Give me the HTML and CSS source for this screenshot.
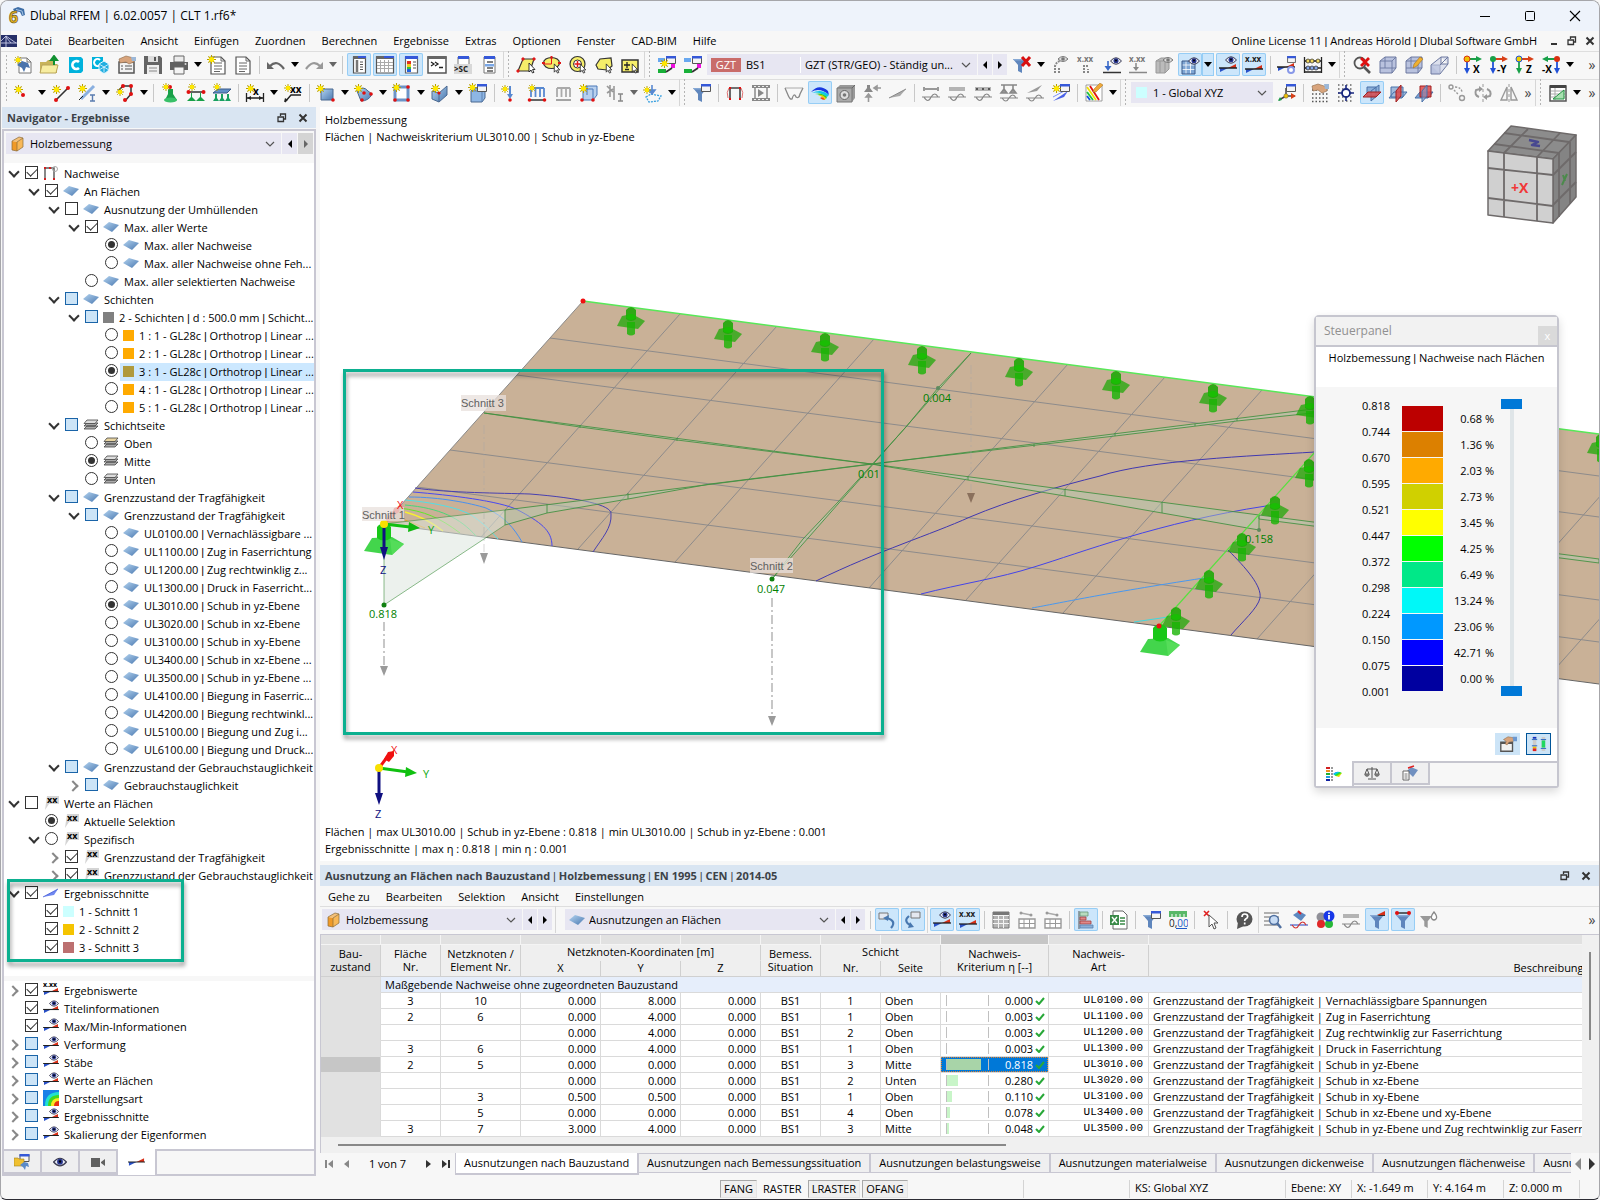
FILE: index.html
```html
<!DOCTYPE html>
<html lang="de">
<head>
<meta charset="utf-8">
<title>Dlubal RFEM | 6.02.0057 | CLT 1.rf6*</title>
<link rel="stylesheet" href="styles.css">
</head>
<body>
<svg class="sprite" aria-hidden="true">
<symbol id="star" viewBox="0 0 10 10"><path d="M5 0v10M0 5h10M1.5 1.5l7 7M8.500 1.500l-7 7" stroke="#b8a000" stroke-width="1.2"/><circle cx="5" cy="5" r="2.800" fill="#ffe800"/></symbol>
<symbol id="win" viewBox="0 0 10 8"><path d="M.5.5h9v7h-9z" fill="#f4f4f4" stroke="#555"/><path d="M0 0h10v2.500H0z" fill="#3558d8"/></symbol>
<symbol id="eye" viewBox="0 0 12 8"><path d="M.5 4Q6-2.500 11.500 4Q6 10.500.5 4z" fill="#e8ecf8" stroke="#3a3a50"/><circle cx="6" cy="3.800" r="2.500" fill="#26348c"/><circle cx="6" cy="3.600" r="1" fill="#000"/></symbol>
<symbol id="wedge" viewBox="0 0 18 8"><path d="M1 4h8L1 8z" fill="#2850c8"/><path d="M9 4l8-4v4z" fill="#d83018"/><path d="M0 4h18" stroke="#222" stroke-width="1.300"/></symbol>
<symbol id="cur" viewBox="0 0 8 12"><path d="M1 1v9l2-2 1.500 3 1.500-.7L4.500 7.500H7z" fill="#fff" stroke="#222" stroke-width=".9"/></symbol>
<symbol id="funnel" viewBox="0 0 14 16"><path d="M0 1h14L9 7v8l-4-2V7z" fill="#5f86bd"/><path d="M0 1h14l-1 1.500H1z" fill="#86a8d4"/></symbol>
<symbol id="funnelg" viewBox="0 0 14 16"><path d="M0 1h14L9 7v8l-4-2V7z" fill="#999"/></symbol>

<symbol id="i-logo" viewBox="0 0 18 18"><path d="M6 2l5-2 6 2 1 6-3 1-2-4-6-1z" fill="#3f6fa8"/><path d="M9 2.500l6 1.500 1 4" stroke="#a6c4e4" fill="none"/><text x="2" y="16" class="t16" fill="#f0b820" stroke="#6b5a20" stroke-width=".7">6</text></symbol>
<symbol id="i-flag" viewBox="0 0 16 12"><path d="M0 0h16v12H0z" fill="#262f68"/><path d="M0 8h16M5 1v11M5 1L0 6M5 1l10 7M5 2l5 6" stroke="#c8cce8" stroke-width=".9"/></symbol>
<symbol id="i-new" viewBox="0 0 20 20"><path d="M6 3h8l4 4v11H6z" fill="#fff" stroke="#777"/><path d="M14 3v4h4" fill="none" stroke="#777"/><path d="M4 10l5-4 6 2 2 5-4-1-2 5-2-4z" fill="#4a74ac"/><use href="#star" x="1" y="1" width="8" height="8"/></symbol>
<symbol id="i-open" viewBox="0 0 20 20"><path d="M1 7h6l2-2h6v4h3v9H1z" fill="#c8b45a"/><path d="M1 18l2-8h16l-2 8z" fill="#f7eda0" stroke="#b8a458"/><path d="M15 10V4M12 5l3-4 3 4z" stroke="#109030" stroke-width="2" fill="#109030"/></symbol>
<symbol id="i-cloud" viewBox="0 0 20 20"><path d="M4 2h12l2 2v12l-2 2H4z" fill="#00b2dc"/><path d="M14 7a4 4 0 1 0 0 6" fill="none" stroke="#fff" stroke-width="2.600"/></symbol>
<symbol id="i-cloud2" viewBox="0 0 20 20"><path d="M1 2h11v12H1z" fill="#00b2dc"/><path d="M9 5a3.500 3.500 0 1 0 0 5" fill="none" stroke="#fff" stroke-width="2"/><path d="M8 9l5-3 5 3v6l-5 4-5-4z" fill="#22aee0" stroke="#e8f8ff"/><path d="M8 9l5 3 5-3M13 12v7M8 15l5-3 5 3" stroke="#e8f8ff" fill="none" stroke-width=".8"/></symbol>
<symbol id="i-props" viewBox="0 0 20 20"><path d="M2 7h15v11H2z" fill="#f2f2f2" stroke="#555" stroke-width="1.500"/><path d="M4 11h2M8 11h7M4 14h2M8 14h7" stroke="#555"/><path d="M2 4l7-3 8 2v4l-5 2-3-2-6 1z" fill="#d8a47c" stroke="#8c6848" stroke-width=".6"/><path d="M14 2h5v4h-4z" fill="#9cb8d8"/></symbol>
<symbol id="i-opt" viewBox="0 0 20 20"><path d="M2 8h13v10H2z" fill="#f2f2f2" stroke="#555" stroke-width="1.500"/><path d="M2 8h13v2H2z" fill="#555"/><path d="M5 5l5-3 6 1v4l-5 1-2 3-2-1 1-3z" fill="#d8a47c" stroke="#8c6848" stroke-width=".6"/><path d="M15 2h5v5h-4z" fill="#6c98d0"/></symbol>
<symbol id="i-save" viewBox="0 0 20 20"><path d="M1 1h16l2 2v16H1z" fill="#646464"/><path d="M5 1h10v6H5z" fill="#ddd"/><path d="M11 2h2v4h-2z" fill="#555"/><path d="M4 10h12v9H4z" fill="#eee"/><path d="M6 13h8M6 16h8" stroke="#888"/></symbol>
<symbol id="i-print" viewBox="0 0 20 20"><path d="M5 1h10v6H5z" fill="#ececec" stroke="#666"/><path d="M1 7h18v8H1z" fill="#606060"/><path d="M5 12h10v7H5z" fill="#f4f4f4" stroke="#666"/><circle cx="16.500" cy="9" r="1" fill="#ddd"/></symbol>
<symbol id="i-doc" viewBox="0 0 20 20"><path d="M3 2h10l4 4v13H3z" fill="#fff" stroke="#555" stroke-width="1.200"/><path d="M13 2v4h4M6 8h8M6 11h8M6 14h8M6 16.500h6" fill="none" stroke="#666"/></symbol>
<symbol id="i-docnew" viewBox="0 0 20 20"><use href="#i-doc" width="20" height="20" x="1"/><use href="#star" x="0" y="0" width="9" height="9"/></symbol>
<symbol id="i-undo" viewBox="0 0 20 20"><path d="M4 11q7-7 14 3" fill="none" stroke="#666" stroke-width="2.200"/><path d="M1 7v7h7z" fill="#666"/></symbol>
<symbol id="i-redo" viewBox="0 0 20 20"><path d="M16 11q-7-7-14 3" fill="none" stroke="#999" stroke-width="2.200"/><path d="M19 7v7h-7z" fill="#999"/></symbol>
<symbol id="i-p1" viewBox="0 0 20 20"><path d="M4.500 2h12v16h-12z" fill="#fff" stroke="#555" stroke-width="1.200"/><path d="M4 1h13v3H4z" fill="#666"/><path d="M9 1h8v2H9z" fill="#3558d8"/><path d="M8 5v12" stroke="#777" stroke-width="2.500"/><path d="M11 7h3M11 9.500h3M11 12h3M11 14.500h3" stroke="#555"/></symbol>
<symbol id="i-p2" viewBox="0 0 20 20"><path d="M1.500 2h17v16h-17z" fill="#fff" stroke="#555" stroke-width="1.200"/><path d="M1 1h18v3H1z" fill="#666"/><path d="M9 1h10v2H9z" fill="#3558d8"/><path d="M2 7.500h16M2 10.500h16M2 13.500h16M5.500 5v13M9.500 5v13M13.500 5v13" stroke="#aaa"/></symbol>
<symbol id="i-p3" viewBox="0 0 20 20"><path d="M4.500 2h12v16h-12z" fill="#fff" stroke="#666" stroke-width="1.200"/><path d="M4 1h13v3H4z" fill="#3558d8"/><path d="M6 6h4v3H6z" fill="#e03020"/><path d="M6 9h4v3H6z" fill="#f0d020"/><path d="M6 12h4v2H6z" fill="#30c040"/><path d="M6 14h4v3H6z" fill="#2060e0"/><path d="M12 7h3M12 10h3M12 13h3" stroke="#555"/></symbol>
<symbol id="i-con" viewBox="0 0 20 20"><path d="M1 2h18v16H1z" fill="#fff" stroke="#555" stroke-width="1.500"/><path d="M.5 1h19v3H.5z" fill="#666"/><path d="M4 7l3 2-3 2M8 7l3 2-3 2M12 12.500h4" fill="none" stroke="#222" stroke-width="1.300"/></symbol>
<symbol id="i-sc" viewBox="0 0 20 20"><path d="M5 2h11v9H5z" fill="#fff" stroke="#777"/><path d="M5 1h11v3H5z" fill="#3558d8"/><path d="M1 9h18v10H1z" fill="#d8d8d8"/><text x="1" y="17" class="t8b" fill="#222">&gt;SC</text></symbol>
<symbol id="i-p4" viewBox="0 0 20 20"><path d="M5 2h11v16H5z" fill="#fff" stroke="#777"/><path d="M5 1h11v3H5z" fill="#3558d8"/><path d="M8 7h6M8 13h6M8 16h6" stroke="#555" stroke-width="1.300"/><path d="M6 9h9v2.500H6z" fill="#7aa8e8"/></symbol>
<symbol id="i-s1" viewBox="0 0 20 20"><path d="M7 4h11l-4 12H2z" fill="#f6ee6a" stroke="#333" stroke-width="1.200"/><path d="M6 3h2v2H6zM17 3h2v2h-2zM1 15h2v2H1z" fill="#e01818" stroke="#e01818"/><use href="#cur" x="12" y="7" width="8" height="12"/></symbol>
<symbol id="i-s2" viewBox="0 0 20 20"><ellipse cx="9.500" cy="8" rx="8" ry="5.500" fill="#f6ee6a" stroke="#333" stroke-width="1.200"/><path d="M9.500 2v7H1" stroke="#e01818" stroke-width="1" fill="none"/><path d="M8.500 1h2v3h-2zM0 7h3v2H0zM16 7h3v2h-3z" fill="#e01818"/><use href="#cur" x="11" y="8" width="8" height="11"/></symbol>
<symbol id="i-s3" viewBox="0 0 20 20"><circle cx="9.500" cy="9" r="7.500" fill="#f6ee6a" stroke="#333" stroke-width="1.200"/><circle cx="9.500" cy="9" r="4" fill="#fff" stroke="#333"/><path d="M9.500 6v6M6.500 9h6" stroke="#e01818" stroke-width="1.500"/><use href="#cur" x="11" y="8" width="8" height="11"/></symbol>
<symbol id="i-s4" viewBox="0 0 20 20"><path d="M2 10l4-6 11-1 1 8-5 4-9-1z" fill="#f6ee6a" stroke="#333" stroke-width="1.200"/><use href="#cur" x="11" y="8" width="8" height="11"/></symbol>
<symbol id="i-s5" viewBox="0 0 20 20"><path d="M2 5h16v12H2z" fill="#f6ee6a" stroke="#333" stroke-width="1.500"/><path d="M7 7v6M4 10h6M5 14.500h4" stroke="#222" stroke-width="1.300"/><use href="#cur" x="11" y="8" width="8" height="11"/></symbol>
<symbol id="i-f2" viewBox="0 0 20 20"><path d="M1 3h7v4H1z" fill="#68a8f0"/><use href="#win" x="9" y="1" width="10" height="8"/><path d="M14 9h4v4h-4z" fill="#f010e0"/><path d="M1 14h8v4H1z" fill="#18b038"/><path d="M9 17l6-4" stroke="#333" stroke-width="1.800"/></symbol>
<symbol id="i-f1" viewBox="0 0 20 20"><use href="#i-f2" width="20" height="20"/><use href="#star" x="3" y="4" width="9" height="9"/></symbol>
<symbol id="i-fx" viewBox="0 0 20 20"><use href="#funnel" x="1" y="3" width="14" height="16"/><path d="M10 2l8 9M18 2l-8 9" stroke="#d81010" stroke-width="3"/></symbol>
<symbol id="i-geye" viewBox="0 0 20 20"><path d="M5 18V11q2-5 6-5M9 18v-6" fill="none" stroke="#888" stroke-width="2" stroke-dasharray="2 1"/><path d="M8 4q5-5 10 0-5 5-10 0z" fill="#ddd" stroke="#777"/><circle cx="13" cy="4" r="1.800" fill="#777"/></symbol>
<symbol id="i-gxx" viewBox="0 0 20 20"><text x="1" y="7" class="t8b" fill="#777">x.xx</text><path d="M8 18v-7h4M12 18v-4" fill="none" stroke="#888" stroke-width="2" stroke-dasharray="2 1"/></symbol>
<symbol id="i-leye" viewBox="0 0 20 20"><path d="M1 17.500h18" stroke="#333" stroke-width="1.500"/><path d="M6 6v7" stroke="#3868c8" stroke-width="1.600"/><path d="M2.500 11h7L6 16z" fill="#3868c8"/><use href="#eye" x="8" y="2" width="12" height="8"/></symbol>
<symbol id="i-lxx" viewBox="0 0 20 20"><path d="M1 17.500h18M8 8v6" stroke="#888" stroke-width="1.500"/><path d="M5 12h6l-3 4z" fill="#888"/><text x="1" y="7" class="t8b" fill="#777">x.xx</text></symbol>
<symbol id="i-gcube" viewBox="0 0 20 20"><path d="M2 6l5-3h8v11l-4 4H2z" fill="#bbb" stroke="#999"/><path d="M2 6h9v12M6 6v12M11 6l4-3" fill="none" stroke="#999"/><path d="M9 5q5-5 10 0-5 5-10 0z" fill="#ddd" stroke="#777"/><circle cx="14" cy="5" r="1.800" fill="#777"/></symbol>
<symbol id="i-grideye" viewBox="0 0 20 20"><path d="M2 6h13v13H2z" fill="#7fa6d4"/><path d="M2 10h13M2 14.500h13M6 6v13M10.500 6v13" stroke="#fff" stroke-width=".8"/><path d="M2 6h13v13H2z" fill="none" stroke="#3a5888"/><use href="#eye" x="8" y="2" width="12" height="8"/></symbol>
<symbol id="i-reseye" viewBox="0 0 20 20"><use href="#wedge" x="1" y="9" width="18" height="8"/><use href="#eye" x="7" y="1" width="12" height="8"/></symbol>
<symbol id="i-resxx" viewBox="0 0 20 20"><use href="#wedge" x="1" y="10" width="18" height="8"/><text x="1" y="7" class="t8b" fill="#222">x.xx</text></symbol>
<symbol id="i-reswin" viewBox="0 0 20 20"><use href="#wedge" x="0" y="8" width="18" height="8"/><use href="#win" x="10" y="1" width="9" height="7"/><circle cx="14" cy="15" r="3" fill="#fff" stroke="#8898e8" stroke-width="2"/></symbol>
<symbol id="i-abacus" viewBox="0 0 20 20"><path d="M1.500 2v16M18.500 2v16M1 6h18M1 13h18M1 17h18" stroke="#222" stroke-width="1.300"/><g stroke="#222" stroke-width=".7"><g fill="#f0d860"><circle cx="5" cy="6" r="2"/><circle cx="9" cy="6" r="2"/><circle cx="15" cy="6" r="2"/></g><g fill="#88a8e8"><circle cx="5" cy="13" r="2"/><circle cx="9" cy="13" r="2"/><circle cx="13" cy="13" r="2"/></g></g></symbol>
<symbol id="i-magx" viewBox="0 0 20 20"><circle cx="8" cy="8" r="5.500" fill="none" stroke="#555" stroke-width="1.800"/><path d="M12 12l6 6" stroke="#555" stroke-width="2.600"/><path d="M9 3l8 8M17 3l-8 8" stroke="#e01010" stroke-width="2.800"/></symbol>
<symbol id="i-cube" viewBox="0 0 20 20"><path d="M2 6l5-4h11v11l-4 5H2z" fill="#b9c2de" stroke="#6c78a0"/><path d="M2 6h12v12M14 6l4-4M7 2v11H2M7 13h11" fill="none" stroke="#6c78a0" stroke-width=".9"/></symbol>
<symbol id="i-cubep" viewBox="0 0 20 20"><use href="#i-cube" width="20" height="20"/><path d="M9 13l1-4 6-7 3 2-6 7z" fill="#f0b030" stroke="#a07020" stroke-width=".6"/></symbol>
<symbol id="i-cuber" viewBox="0 0 20 20"><path d="M1 10h9v9H1z" fill="#b9c2de" stroke="#6c78a0"/><path d="M1 10l10-8h7v7l-8 10M10 10l8-8M11 2v7h7" fill="#c9d0e6" fill-opacity=".6" stroke="#6c78a0"/></symbol>
<symbol id="i-axx" viewBox="0 0 20 20"><path d="M4 4h10" stroke="#18a048" stroke-width="1.800"/><path d="M13 1l6 3-6 3z" fill="#18a048"/><path d="M4 5v9" stroke="#2050d8" stroke-width="1.800"/><path d="M1 13h6l-3 6z" fill="#2050d8"/><circle cx="4" cy="4" r="3" fill="#f0c000" stroke="#d83010"/><text x="10" y="18" class="t10b">X</text></symbol>
<symbol id="i-axy" viewBox="0 0 20 20"><path d="M4 4h10" stroke="#d84018" stroke-width="1.800"/><path d="M13 1l6 3-6 3z" fill="#d84018"/><path d="M4 5v9" stroke="#2050d8" stroke-width="1.800"/><path d="M1 13h6l-3 6z" fill="#2050d8"/><circle cx="4" cy="4" r="3" fill="#18a048"/><text x="8" y="18" class="t10b">-Y</text></symbol>
<symbol id="i-axz" viewBox="0 0 20 20"><path d="M4 4h10" stroke="#d84018" stroke-width="1.800"/><path d="M13 1l6 3-6 3z" fill="#d84018"/><path d="M4 5v9" stroke="#18a048" stroke-width="1.800"/><path d="M1 13h6l-3 6z" fill="#18a048"/><circle cx="4" cy="4" r="3" fill="#f0d000" stroke="#2050d8"/><text x="11" y="18" class="t10b">Z</text></symbol>
<symbol id="i-axmx" viewBox="0 0 20 20"><path d="M16 4H6" stroke="#18a048" stroke-width="1.800"/><path d="M7 1L1 4l6 3z" fill="#18a048"/><path d="M16 5v9" stroke="#2050d8" stroke-width="1.800"/><path d="M13 13h6l-3 6z" fill="#2050d8"/><circle cx="16" cy="4" r="3" fill="#d83010"/><text x="1" y="18" class="t10b">-X</text></symbol>

<symbol id="i-node" viewBox="0 0 20 20"><use href="#star" x="1" y="2" width="9" height="9"/><circle cx="10" cy="12" r="2" fill="#e01010"/></symbol>
<symbol id="i-line" viewBox="0 0 20 20"><path d="M5 17L17 5" stroke="#333" stroke-width="1.600"/><circle cx="5" cy="17" r="2" fill="#e01010"/><circle cx="17" cy="5" r="2" fill="#e01010"/><use href="#star" x="1" y="2" width="9" height="9"/></symbol>
<symbol id="i-member" viewBox="0 0 20 20"><path d="M4 16L17 3" stroke="#8ab0e0" stroke-width="3"/><path d="M2 17L6 13" stroke="#222"/><path d="M13 12h5M15.500 12v6M13 18h5" stroke="#5a7cb0" stroke-width="1.400"/><use href="#star" x="1" y="1" width="9" height="9"/></symbol>
<symbol id="i-poly" viewBox="0 0 20 20"><path d="M3 8l5-5h8v8l-6 7" fill="none" stroke="#333" stroke-width="1.500"/><g fill="#e01010"><circle cx="8" cy="3" r="2"/><circle cx="16" cy="3" r="2"/><circle cx="16" cy="11" r="2"/><circle cx="10" cy="17" r="2"/></g><use href="#star" x="1" y="5" width="8" height="8"/></symbol>
<symbol id="i-sup" viewBox="0 0 20 20"><path d="M8 6h5v5l4 6q-6 4-12 0l3-6z" fill="#18a048"/><ellipse cx="10.500" cy="17" rx="6.500" ry="2.500" fill="#38c068"/><circle cx="10" cy="4" r="2" fill="#e01010"/><use href="#star" x="2" y="0" width="8" height="8"/></symbol>
<symbol id="i-sup2" viewBox="0 0 20 20"><path d="M2 9h16" stroke="#333" stroke-width="1.500"/><path d="M5 10v4l-4 4h9l-4-4v-4zM14 10v4l-4 4h9l-4-4v-4z" fill="#18a048"/><circle cx="2.500" cy="9" r="2" fill="#e01010"/><circle cx="17.500" cy="9" r="2" fill="#e01010"/><use href="#star" x="2" y="0" width="8" height="8"/></symbol>
<symbol id="i-sup3" viewBox="0 0 20 20"><path d="M1 10l5-4h13l-4 4z" fill="#6090c8" stroke="#3a5a88"/><path d="M3 11v4l-2 3h6l-2-3v-4zM9 11v4l-2 3h6l-2-3v-4zM15 11v4l-2 3h6l-2-3v-4z" fill="#18a060"/><use href="#star" x="1" y="0" width="8" height="8"/></symbol>
<symbol id="i-dim" viewBox="0 0 20 20"><path d="M1.500 10v9M18.500 10v9M2 15h16" stroke="#222" stroke-width="1.300"/><path d="M2 15l4-2v4zM18 15l-4-2v4z" fill="#222"/><text x="8" y="12" class="t10b">x</text><use href="#star" x="1" y="1" width="9" height="9"/></symbol>
<symbol id="i-dimxx" viewBox="0 0 20 20"><path d="M18 12H8l-6 7" fill="none" stroke="#222" stroke-width="1.400"/><path d="M1 19l1-4 3 2z" fill="#222"/><text x="7" y="10" class="t10b">xx</text><use href="#star" x="1" y="1" width="8" height="8"/></symbol>
<symbol id="i-surf" viewBox="0 0 20 20"><path d="M5 6h12v11H5z" fill="url(#gBlue)" stroke="#4a6890"/><circle cx="17" cy="17" r="1.800" fill="#e01010"/><use href="#star" x="0" y="1" width="9" height="9"/></symbol>
<symbol id="i-surf2" viewBox="0 0 20 20"><path d="M3 8q6-6 11 0l4 3q-3 7-11 7z" fill="url(#gBlue)" stroke="#4a6890"/><g fill="#e01010"><circle cx="17" cy="11" r="1.800"/><circle cx="8" cy="17" r="1.800"/><circle cx="10" cy="10" r="1.800"/></g><use href="#star" x="0" y="1" width="9" height="9"/></symbol>
<symbol id="i-open2" viewBox="0 0 20 20"><path d="M3 4h13v13H3z" fill="#fff" stroke="#6c94c8" stroke-width="3"/><g fill="#e01010"><circle cx="16" cy="4" r="1.800"/><circle cx="16" cy="17" r="1.800"/><circle cx="3" cy="17" r="1.800"/></g><use href="#star" x="0" y="0" width="9" height="9"/></symbol>
<symbol id="i-solid" viewBox="0 0 20 20"><path d="M2 8l7 2 8-7v9l-8 7-7-3z" fill="url(#gBlue)" stroke="#4a6890"/><path d="M9 10v9" stroke="#4a6890"/><circle cx="9" cy="10" r="1.600" fill="#e01010"/><use href="#star" x="1" y="1" width="9" height="9"/></symbol>
<symbol id="i-solid2" viewBox="0 0 20 20"><path d="M3 8l3-3h11v10l-3 4H3z" fill="#8eb6e4" stroke="#4a6890"/><path d="M3 8h11v11" fill="none" stroke="#5c80b0"/><use href="#win" x="9" y="1" width="10" height="8"/><use href="#star" x="0" y="0" width="9" height="9"/></symbol>
<symbol id="i-ld1" viewBox="0 0 20 20"><path d="M9 3v9" stroke="#5888d0" stroke-width="2"/><path d="M6 11h6l-3 5z" fill="#5888d0"/><circle cx="9" cy="17" r="1.800" fill="#e01010"/><use href="#star" x="0" y="2" width="8" height="8"/></symbol>
<symbol id="i-ld2" viewBox="0 0 20 20"><path d="M2 17h16" stroke="#333" stroke-width="1.500"/><path d="M4 5v9M8.500 5v9M13 5v9M17 5v9M4 5h13" stroke="#5888d0" stroke-width="1.800" fill="none"/><circle cx="2.500" cy="17" r="1.800" fill="#e01010"/><circle cx="17.500" cy="17" r="1.800" fill="#e01010"/><use href="#star" x="1" y="1" width="8" height="8"/></symbol>
<symbol id="i-ld3" viewBox="0 0 20 20"><path d="M3 17h15" stroke="#888" stroke-width="1.500"/><path d="M4 5v9M8.500 5v9M13 5v9M17 5v9M4 5h13" stroke="#aaa" stroke-width="1.800" fill="none"/></symbol>
<symbol id="i-ld4" viewBox="0 0 20 20"><path d="M4 6l4-3h10v9l-4 5H4z" fill="#b8d0ee" stroke="#4a78b8"/><path d="M4 6h10v11M8 3v9" fill="none" stroke="#4a78b8"/><g fill="#e01010"><circle cx="3" cy="17" r="1.800"/><circle cx="14" cy="17" r="1.800"/></g><use href="#star" x="0" y="1" width="9" height="9"/></symbol>
<symbol id="i-ld5" viewBox="0 0 20 20"><path d="M2 3l6 6M5 2v12M9 3v14M2 10l6-4" stroke="#999" stroke-width="1.600"/><path d="M13 11h5M15.500 11v7M13 18h5" stroke="#888" stroke-width="1.400"/></symbol>
<symbol id="i-ld6" viewBox="0 0 20 20"><path d="M3 14l5-3 10 2-3 5-9 1z" fill="none" stroke="#38a0e0" stroke-width="1.300" stroke-dasharray="2 1"/><path d="M9 2v7M6 7l3 4 3-4z" stroke="#5888d0" stroke-width="1.600" fill="#5888d0"/><use href="#star" x="0" y="3" width="8" height="8"/></symbol>
<symbol id="i-fwin" viewBox="0 0 20 20"><use href="#funnel" x="1" y="4" width="14" height="16"/><use href="#win" x="9" y="1" width="10" height="8"/></symbol>
<symbol id="i-defo" viewBox="0 0 20 20"><path d="M5 17V5h10v12" fill="none" stroke="#444" stroke-width="1.600"/><path d="M3 15q-2-6 1-10M17 15q2-6-1-10" fill="none" stroke="#e07070"/><path d="M4 4h2v2H4zM14 4h2v2h-2zM4 15h2v2H4zM14 15h2v2h-2z" fill="#e01010"/></symbol>
<symbol id="i-film" viewBox="0 0 20 20"><path d="M1 2h18v3H1zM1 15h18v3H1z" fill="#888"/><path d="M4 5v10M16 5v10" stroke="#888" stroke-width="1.500"/><path d="M7 6l6 4-6 4z" fill="#888"/><path d="M3 3.500h14M3 16.500h14" stroke="#eee" stroke-dasharray="2 2"/></symbol>
<symbol id="i-mom" viewBox="0 0 20 20"><path d="M1 5h18" stroke="#aaa"/><path d="M1 5l3 7q2 5 4 4 2-7 4-2 3 2 4-3l3-6" fill="none" stroke="#888" stroke-width="1.300"/></symbol>
<symbol id="i-iso" viewBox="0 0 20 20"><path d="M1 9q8-9 17-1l1 4q-9-8-18-3z" fill="#1838e0"/><path d="M2 10q9-5 17 2l-2 2Q9 8 2 10z" fill="#10c8e8"/><path d="M5 11q7-2 12 3l-1 2q-6-5-11-5z" fill="#30d030"/><path d="M8 12q4-1 8 3l-1 2q-3-4-7-5z" fill="#f0d000"/><path d="M10 15q3-2 5 2-3 0-5-2z" fill="#f04010"/></symbol>
<symbol id="i-dice" viewBox="0 0 20 20"><path d="M1 5l3-3h15v13l-3 4H1z" fill="#999"/><path d="M1 5h15v14H1z" fill="#aaa" stroke="#777"/><circle cx="8.500" cy="12" r="4.500" fill="#ddd" stroke="#666"/><circle cx="8.500" cy="12" r="1.800" fill="#777"/><path d="M16 5l3-3" stroke="#666"/></symbol>
<symbol id="i-reac" viewBox="0 0 20 20"><path d="M5 2h3v3l3 4H2l3-4z" fill="#888"/><path d="M19 5h-6M15 3l-3 2 3 2z" stroke="#999" stroke-width="1.600"/><path d="M6.500 19v-6M4 14l2.500-3 2.500 3z" stroke="#999" stroke-width="1.600" fill="#999"/></symbol>
<symbol id="i-sect" viewBox="0 0 20 20"><path d="M1 15l17-9-6 7z" fill="#aaa"/><path d="M1 15L18 6" stroke="#888"/></symbol>
<symbol id="i-w1" viewBox="0 0 20 20"><path d="M3 6h14M3 4v4M17 4v4" stroke="#999" stroke-width="2"/><path d="M1 14h18M3 14q4 7 7 0 4-6 7 0" fill="none" stroke="#888" stroke-width="1.200"/></symbol>
<symbol id="i-w2" viewBox="0 0 20 20"><path d="M2 6h16" stroke="#b4b4b4" stroke-width="4"/><path d="M1 14h18M3 14q4 7 7 0 4-6 7 0" fill="none" stroke="#888" stroke-width="1.200"/></symbol>
<symbol id="i-w3" viewBox="0 0 20 20"><path d="M2 6h16" stroke="#b4b4b4" stroke-width="4"/><path d="M3 6h14" stroke="#555" stroke-width="2" stroke-dasharray="2 4"/><path d="M1 14h18M3 14q4 7 7 0 4-6 7 0" fill="none" stroke="#888" stroke-width="1.200"/></symbol>
<symbol id="i-w4" viewBox="0 0 20 20"><path d="M2 2h16M5 2v4l-3 4h6l-3-4M14 2v4l-3 4h6l-3-4" stroke="#888" stroke-width="1.600" fill="#999"/><path d="M1 15h18M3 15q4 6 7 0 4-6 7 0" fill="none" stroke="#888" stroke-width="1.200"/></symbol>
<symbol id="i-w5" viewBox="0 0 20 20"><path d="M2 10L17 2l-5 6z" fill="#999"/><path d="M1 15h18M3 15q4 6 7 0 4-6 7 0" fill="none" stroke="#888" stroke-width="1.200"/></symbol>
<symbol id="i-w6" viewBox="0 0 20 20"><path d="M2 18L17 8l-4 6z" fill="#4a62e8"/><path d="M2 14L17 6" stroke="#7a90f8"/><use href="#win" x="9" y="1" width="10" height="8"/><use href="#star" x="1" y="1" width="9" height="9"/></symbol>
<symbol id="i-pal" viewBox="0 0 20 20"><path d="M2 2h16v16H2z" fill="#fff" stroke="#888" stroke-width=".8"/><path d="M6 3l9 14" stroke="#e01010" stroke-width="1.800"/><path d="M3 4l9 13" stroke="#f0e000" stroke-width="1.800"/><path d="M3 9l6 8" stroke="#20c040" stroke-width="1.800"/><path d="M3 13l3 4" stroke="#1050e0" stroke-width="1.800"/><path d="M9 9l1-3 6-6 3 2-7 7z" fill="#f0a838" stroke="#a07020" stroke-width=".5"/></symbol>
<symbol id="i-cs" viewBox="0 0 20 20"><path d="M9 13V5M9 13l-7 4M9 13h9" stroke="#444" stroke-width="1.500"/><path d="M1 18l2-4 2 3z" fill="#18a048"/><path d="M14 10l5 3-5 3z" fill="#d84018"/><circle cx="9" cy="13" r="2.200" fill="#f0c000" stroke="#555" stroke-width=".5"/><use href="#win" x="9" y="1" width="10" height="8"/></symbol>
<symbol id="i-gh" viewBox="0 0 20 20"><path d="M2 7h16M2 11h16M2 15h16M2 18.500h16" stroke="#555" stroke-width="1.500" stroke-dasharray="1.500 2"/><path d="M2 3l6-2 9 3v4l-5 2-4-3-5 1z" fill="#d8a47c" stroke="#8c6848" stroke-width=".6"/><path d="M14 1h5v5h-4z" fill="#9cb8d8"/></symbol>
<symbol id="i-snap" viewBox="0 0 20 20"><path d="M2 2h16M2 6h16M2 10h16M2 14h16M2 18h16" stroke="#666" stroke-width="1.500" stroke-dasharray="1.500 2.500"/><circle cx="10" cy="10" r="4" fill="#fff" stroke="#1a2880" stroke-width="1.800"/><path d="M10 2v5M10 13v5M2 10h5M13 10h5" stroke="#1a2880" stroke-width="1.600"/></symbol>
<symbol id="i-pl1" viewBox="0 0 20 20"><path d="M5 4h9v9H5zM9 8l8-6v9l-8 7z" fill="#7aa0d0" fill-opacity=".8" stroke="#4870a8"/><path d="M1 14l5-5h13l-5 5z" fill="#e04848" stroke="#a02020" fill-opacity=".8"/></symbol>
<symbol id="i-pl2" viewBox="0 0 20 20"><path d="M3 4h12v10H3zM1 15l5-6h13l-5 6z" fill="#7aa0d0" fill-opacity=".7" stroke="#4870a8"/><path d="M8 8l5-6v11l-5 6z" fill="#e04848" fill-opacity=".85" stroke="#a02020"/></symbol>
<symbol id="i-pl3" viewBox="0 0 20 20"><path d="M1 15l5-6h13l-5 6z" fill="#7aa0d0" stroke="#4870a8"/><path d="M6 3h11v11H6z" fill="#e04848" fill-opacity=".85" stroke="#a02020"/><path d="M8 8l5-6v11l-5 6z" fill="#7aa0d0" fill-opacity=".6" stroke="#4870a8"/></symbol>
<symbol id="i-g1" viewBox="0 0 20 20"><g fill="none" stroke="#999" stroke-width="1.400"><circle cx="4" cy="4" r="2"/><circle cx="15" cy="15" r="2.500"/><path d="M8 4q6 0 7 5M7 7l5 5" stroke-dasharray="2 1.500"/></g></symbol>
<symbol id="i-g2" viewBox="0 0 20 20"><path d="M10 1v18" stroke="#999" stroke-dasharray="3 2"/><path d="M6 14Q1 12 3 7l4-1M14 6q5 2 3 7l-4 1" fill="none" stroke="#999" stroke-width="2"/><path d="M6 3v6l4-3zM14 11v6l-4-3z" fill="#999"/></symbol>
<symbol id="i-g3" viewBox="0 0 20 20"><path d="M10 1v18" stroke="#999" stroke-dasharray="3 2"/><path d="M8 4v13H2zM12 4v13h6z" fill="none" stroke="#999" stroke-width="1.400"/></symbol>
<symbol id="i-meas" viewBox="0 0 20 20"><path d="M2 3h16v15H2z" fill="#fff" stroke="#555" stroke-width="1.500"/><path d="M2 2h16v3H2z" fill="#444"/><path d="M3 8h14M3 11h14M3 14h14M7 5v12" stroke="#aaa"/><path d="M5 16h11V7z" fill="#a8e0b0" stroke="#209040"/></symbol>

<symbol id="i-b1" viewBox="0 0 20 20"><path d="M2 3h9v6H2z" fill="#e4e8f0" stroke="#777"/><path d="M14 18q6-7-4-10" fill="none" stroke="#4878b0" stroke-width="2.200"/><path d="M6 8l6-3-1 6z" fill="#4878b0"/></symbol>
<symbol id="i-b2" viewBox="0 0 20 20"><path d="M8 2h9v6H8z" fill="#e4e8f0" stroke="#777"/><path d="M6 6q-6 5 1 9" fill="none" stroke="#4878b0" stroke-width="2.200"/><path d="M11 17l-6 1 2-6z" fill="#4878b0"/></symbol>
<symbol id="i-tg" viewBox="0 0 20 20"><path d="M2 2h16v16H2z" fill="#b4b4b4" stroke="#777"/><path d="M2 5.500h16M2 9.500h16M2 13.500h16M7.500 2v16M12.500 2v16" stroke="#f4f4f4"/><path d="M2 2h16v3H2z" fill="#777"/></symbol>
<symbol id="i-tr" viewBox="0 0 20 20"><path d="M2 9h16v9H2z" fill="#fff" stroke="#999" stroke-width="1.400"/><path d="M2 13.500h16M7 9v9M12.500 9v9" stroke="#999"/><path d="M4 3l10 2" stroke="#aaa" stroke-width="1.500"/><circle cx="4" cy="3" r="1.500" fill="#999"/><circle cx="14" cy="5" r="1.500" fill="#999"/></symbol>
<symbol id="i-bars" viewBox="0 0 20 20"><path d="M3 1v18" stroke="#555"/><path d="M4 2h8v4H4z" fill="#b8dcc0" stroke="#689878" stroke-width=".8"/><path d="M4 7h6v3H4zM4 11h11v3H4z" fill="#e08888" stroke="#a04040" stroke-width=".8"/><path d="M4 15h13v3H4z" fill="#8ab0d8" stroke="#5880b0" stroke-width=".8"/></symbol>
<symbol id="i-xls" viewBox="0 0 20 20"><path d="M4 1h10l4 4v14H4z" fill="#fff" stroke="#666"/><path d="M1 5h9v10H1z" fill="#3a8a48"/><path d="M3 7l5 6M8 7l-5 6" stroke="#fff" stroke-width="1.400"/><path d="M11 8h5M11 11h5M11 14h5" stroke="#3a8a48" stroke-width="1.500"/></symbol>
<symbol id="i-dec" viewBox="0 0 20 20"><path d="M1 1h18v6H1z" fill="#58b868"/><path d="M4 4v3M8 4v3M12 4v3M16 4v3" stroke="#fff"/><text x="1" y="17" class="t10" fill="#222">0,<tspan fill="#2058c8">00</tspan></text><path d="M8 18.500h11" stroke="#2058c8"/></symbol>
<symbol id="i-curx" viewBox="0 0 20 20"><path d="M3 1l5 5M8 1L3 6" stroke="#e02020" stroke-width="1.600"/><path d="M8 5v12l3-3 2 5 2-1-2-5h4z" fill="#fff" stroke="#555"/></symbol>
<symbol id="i-help" viewBox="0 0 20 20"><ellipse cx="10.500" cy="9" rx="8" ry="7.500" fill="#555"/><path d="M4 12l-1 7 7-3z" fill="#555"/><path d="M8 7q0-3 2.700-3 3 0 3 2.500 0 1.500-2 2.500-1 .6-1 2M10.700 12.500v2" fill="none" stroke="#fff" stroke-width="1.700"/></symbol>
<symbol id="i-mag" viewBox="0 0 20 20"><path d="M1 3h15M1 7h15M1 11h15M1 15h15" stroke="#999" stroke-width="1.400"/><circle cx="11" cy="10" r="4.500" fill="#c8dcf4" stroke="#5070a0" stroke-width="1.500"/><path d="M14 13l4 5" stroke="#5070a0" stroke-width="2.500"/></symbol>
<symbol id="i-sw" viewBox="0 0 20 20"><path d="M4 5l6-4 7 4-5 6z" fill="#5c88c0"/><path d="M9 1l3 3" stroke="#e02020" stroke-width="2"/><path d="M1 15h18" stroke="#2040c0"/><path d="M3 15q4 6 7 0 4-6 7 0" fill="none" stroke="#d03030" stroke-width="1.200"/></symbol>
<symbol id="i-info" viewBox="0 0 20 20"><circle cx="6" cy="7" r="4.500" fill="#909098"/><circle cx="6" cy="14" r="4" fill="#e02828"/><circle cx="14" cy="14" r="4" fill="#28b838"/><circle cx="14" cy="6" r="5.500" fill="#1838e8"/><path d="M14 2.500v1.500M14 5v4.500" stroke="#fff" stroke-width="1.800"/></symbol>
<symbol id="i-fw" viewBox="0 0 20 20"><use href="#funnel" x="3" y="4" width="14" height="16"/><path d="M2 6h8l8-4v4z" fill="#333"/><path d="M10 5l8-4v4z" fill="#d83018"/></symbol>
<symbol id="i-fr" viewBox="0 0 20 20"><use href="#funnel" x="3" y="4" width="14" height="16"/><path d="M3 3h14" stroke="#333" stroke-width="1.500"/><circle cx="4" cy="3" r="2" fill="#e01010"/><circle cx="16" cy="3" r="2" fill="#e01010"/></symbol>
<symbol id="i-fg" viewBox="0 0 20 20"><use href="#funnelg" x="1" y="5" width="12" height="14"/><path d="M15 2q4 5 2 7t-4 0q-2-2 2-7z" fill="#fff" stroke="#888" stroke-width="1.300"/></symbol>

<symbol id="n-flat" viewBox="0 0 16 16"><path d="M0 8l6-5 10 3-7 7z" fill="url(#gBlue)"/></symbol>
<symbol id="n-nach" viewBox="0 0 16 16"><path d="M2 15V3h9v12" fill="none" stroke="#555" stroke-width="1.400"/><path d="M1 2h2v2H1zM1 13h2v2H1zM10 13h2v2h-2zM6 2h2v2H6z" fill="#d02020"/><circle cx="12" cy="4" r="2.500" fill="none" stroke="#aaa"/></symbol>
<symbol id="n-layer" viewBox="0 0 16 16"><path d="M1 12l3-3h11l-3 3zM1 9l3-3h11l-3 3z" fill="#aaa" stroke="#444" stroke-width=".8"/><path d="M1 6.500L4 3h11l-3 3.500z" fill="#ddd" stroke="#444" stroke-width=".8"/></symbol>
<symbol id="n-layert" viewBox="0 0 16 16"><path d="M1 12l3-3h11l-3 3zM1 9l3-3h11l-3 3z" fill="#aaa" stroke="#444" stroke-width=".8"/><path d="M1 6.500L4 3h11l-3 3.500z" fill="#e8d4a0" stroke="#444" stroke-width=".8"/></symbol>
<symbol id="n-xx" viewBox="0 0 16 16"><path d="M4 1h12v8H6l-4 6z" fill="#d4d4d4"/><text x="4" y="8" class="t9b">xx</text></symbol>
<symbol id="n-sect" viewBox="0 0 16 16"><path d="M0 12L15 4l-4 6z" fill="#7088f0"/><path d="M0 12L15 4" stroke="#4058d8" stroke-width=".8"/></symbol>
<symbol id="n-eye" viewBox="0 0 16 16"><use href="#wedge" x="0" y="6" width="16" height="7"/><use href="#eye" x="6" y="0" width="10" height="7"/></symbol>
<symbol id="n-val" viewBox="0 0 16 16"><use href="#wedge" x="0" y="6" width="16" height="7"/><text x="0" y="5" class="t7b">x.xx</text></symbol>
<symbol id="n-rain" viewBox="0 0 16 16"><path d="M0 0h16v16H0z" fill="#1880e8"/><path d="M2 16q0-14 14-14v14z" fill="#20e0d0"/><path d="M5 16q0-11 11-11v11z" fill="#40d820"/><path d="M8 16q0-8 8-8v8z" fill="#f8e820"/><path d="M11 16q0-5 5-5v5z" fill="#e83010"/></symbol>
<symbol id="n-wood" viewBox="0 0 16 16"><path d="M2 5l7-4 4 1-6 4z" fill="#f4c078"/><path d="M2 5l5 1v9l-5-1z" fill="#f09a28"/><path d="M7 6l6-4v9l-6 4z" fill="#f8b858"/><path d="M2 5l7-4 4 1v9l-6 4-5-1zM7 6v9M7 6l6-4" fill="none" stroke="#8a6a38" stroke-width=".7"/></symbol>
<symbol id="n-data" viewBox="0 0 16 16"><use href="#win" x="5" y="0" width="11" height="8"/><path d="M0 4h4l1 1h5v7H0z" fill="#f0c030" stroke="#a08020" stroke-width=".6"/><path d="M6 11l4-3 4 1 1 4-3-1-1 4-2-3z" fill="#5a8ac8"/></symbol>
<symbol id="n-cam" viewBox="0 0 16 16"><path d="M1 4h9v9H1zM11 8l4-3v7l-4-3z" fill="#606060"/></symbol>
<symbol id="n-leg" viewBox="0 0 16 16"><path d="M0 1h4v2H0z" fill="#d02020"/><path d="M0 4h4v2H0z" fill="#f09020"/><path d="M0 7h4v2H0z" fill="#20b030"/><path d="M0 10h4v2H0z" fill="#20a0e0"/><path d="M0 13h4v2H0z" fill="#1020a0"/><path d="M5 2h2M5 5h2M5 8h2M5 11h2M5 14h2" stroke="#333"/><path d="M7 8q4-4 9-1l-3 4q-3 0-6-3z" fill="url(#gRain)"/></symbol>
<symbol id="n-scale" viewBox="0 0 16 16"><path d="M8 2v11M4 14h8M3 4h10M3 4L1 9h4zM13 4l-2 5h4z" fill="none" stroke="#555"/><path d="M0 9h6q-1 3-3 3T0 9zM10 9h6q-1 3-3 3t-3-3z" fill="#777"/></symbol>
<symbol id="n-rep" viewBox="0 0 16 16"><path d="M5 6l4-4 7 3-5 7z" fill="#7090c0"/><path d="M6 3l6-2M6 3h1" stroke="#e02020" stroke-width="1.400"/><path d="M1 6h6v9H1z" fill="#fff" stroke="#666"/><path d="M2.500 9h3M2.500 11h3M2.500 13h3" stroke="#777"/></symbol>
<symbol id="n-chk" viewBox="0 0 10 8"><path d="M1 4l3 3 5-6" fill="none" stroke="#28a838" stroke-width="2"/></symbol>
<symbol id="chev" viewBox="0 0 10 10"><path d="M1 3l4 4 4-4" fill="none" stroke="#555" stroke-width="1.200"/></symbol>
<symbol id="tl" viewBox="0 0 6 8"><path d="M5 0v8L1 4z"/></symbol>
<symbol id="tr" viewBox="0 0 6 8"><path d="M1 0v8l4-4z"/></symbol>
<symbol id="td" viewBox="0 0 8 5"><path d="M0 0h8L4 5z"/></symbol>
<symbol id="rest" viewBox="0 0 10 10"><path d="M3.500 3V1h5v5H7M1 4h5.500v4.500H1z" fill="none" stroke="#333" stroke-width="1.300"/></symbol>
<symbol id="cls" viewBox="0 0 10 10"><path d="M1.500 1.500l7 7M8.500 1.500l-7 7" stroke="#333" stroke-width="2"/></symbol>
</svg>

<div class="window">
<header class="titlebar">
  <svg class="ic18"><use href="#i-logo"/></svg><h1>Dlubal RFEM | 6.02.0057 | CLT 1.rf6*</h1>
  <div class="winbtns">
    <button aria-label="Minimieren"><svg viewBox="0 0 12 12"><path d="M1 6.500h10" stroke="#000"/></svg></button>
    <button aria-label="Maximieren"><svg viewBox="0 0 12 12"><rect x="1.500" y="1.500" width="9" height="9" rx="1" fill="none" stroke="#000"/></svg></button>
    <button aria-label="Schließen"><svg viewBox="0 0 12 12"><path d="M1 1l10 10M11 1L1 11" stroke="#000" stroke-width="1.100"/></svg></button>
  </div>
</header>
<nav class="menubar">
  <svg class="flag"><use href="#i-flag"/></svg>
  <button>Datei</button><button>Bearbeiten</button><button>Ansicht</button><button>Einfügen</button><button>Zuordnen</button><button>Berechnen</button><button>Ergebnisse</button><button>Extras</button><button>Optionen</button><button>Fenster</button><button>CAD-BIM</button><button>Hilfe</button>
  <span class="license">Online License 11 <b class="vb">|</b> Andreas Hörold <b class="vb">|</b> Dlubal Software GmbH</span>
  <button class="mini" aria-label="Minimieren"><svg viewBox="0 0 10 10"><path d="M2 8h6" stroke="#333" stroke-width="2"/></svg></button>
  <button class="mini" aria-label="Wiederherstellen"><svg><use href="#rest"/></svg></button>
  <button class="mini" aria-label="Schließen"><svg><use href="#cls"/></svg></button>
</nav>

<div class="toolbar">
  <i class="grip"></i>
  <button class="tb"><svg><use href="#i-new"/></svg></button><button class="tb"><svg><use href="#i-open"/></svg></button><button class="tb"><svg><use href="#i-cloud"/></svg></button><button class="tb"><svg><use href="#i-cloud2"/></svg></button><button class="tb"><svg><use href="#i-props"/></svg></button><button class="tb"><svg><use href="#i-save"/></svg></button><button class="tb"><svg><use href="#i-print"/></svg></button><button class="dd"><svg><use href="#td"/></svg></button>
  <button class="tb"><svg><use href="#i-docnew"/></svg></button><button class="tb"><svg><use href="#i-doc"/></svg></button><i class="sep"></i>
  <button class="tb"><svg><use href="#i-undo"/></svg></button><button class="dd"><svg><use href="#td"/></svg></button><button class="tb"><svg><use href="#i-redo"/></svg></button><button class="dd dim"><svg><use href="#td"/></svg></button><i class="sep"></i>
  <button class="tb on"><svg><use href="#i-p1"/></svg></button><button class="tb on"><svg><use href="#i-p2"/></svg></button><button class="tb on"><svg><use href="#i-p3"/></svg></button><button class="tb"><svg><use href="#i-con"/></svg></button><button class="tb"><svg><use href="#i-sc"/></svg></button><button class="tb"><svg><use href="#i-p4"/></svg></button>
  <i class="gsep"></i>
  <button class="tb"><svg><use href="#i-s1"/></svg></button><button class="tb"><svg><use href="#i-s2"/></svg></button><button class="tb"><svg><use href="#i-s3"/></svg></button><button class="tb"><svg><use href="#i-s4"/></svg></button><button class="tb"><svg><use href="#i-s5"/></svg></button>
  <i class="gsep"></i>
  <button class="tb"><svg><use href="#i-f1"/></svg></button><button class="tb"><svg><use href="#i-f2"/></svg></button>
  <div class="cgroup">
    <div class="combo w270"><span class="tag">GZT</span><span class="bs">BS1</span><select aria-label="Bemessungssituation"><option>GZT (STR/GEO) - Ständig un...</option></select><svg class="chev"><use href="#chev"/></svg></div>
    <button class="step"><svg><use href="#tl"/></svg></button><button class="step"><svg><use href="#tr"/></svg></button>
  </div>
  <button class="tb"><svg><use href="#i-fx"/></svg></button><button class="dd"><svg><use href="#td"/></svg></button>
  <button class="tb"><svg><use href="#i-geye"/></svg></button><button class="tb"><svg><use href="#i-gxx"/></svg></button><button class="tb"><svg><use href="#i-leye"/></svg></button><button class="tb"><svg><use href="#i-lxx"/></svg></button><button class="tb"><svg><use href="#i-gcube"/></svg></button>
  <span class="split"><button class="tb on"><svg><use href="#i-grideye"/></svg></button><button class="dd on"><svg><use href="#td"/></svg></button></span>
  <button class="tb on"><svg><use href="#i-reseye"/></svg></button><button class="tb on"><svg><use href="#i-resxx"/></svg></button><i class="sep"></i>
  <button class="tb"><svg><use href="#i-reswin"/></svg></button><button class="tb"><svg><use href="#i-abacus"/></svg></button><button class="dd"><svg><use href="#td"/></svg></button>
  <i class="gsep"></i>
  <button class="tb"><svg><use href="#i-magx"/></svg></button><button class="tb"><svg><use href="#i-cube"/></svg></button><button class="tb"><svg><use href="#i-cubep"/></svg></button><button class="tb"><svg><use href="#i-cuber"/></svg></button><i class="sep"></i>
  <button class="tb"><svg><use href="#i-axx"/></svg></button><button class="tb"><svg><use href="#i-axy"/></svg></button><button class="tb"><svg><use href="#i-axz"/></svg></button><button class="tb"><svg><use href="#i-axmx"/></svg></button><button class="dd"><svg><use href="#td"/></svg></button>
  <button class="more end">»</button>
</div>
<div class="toolbar">
  <i class="grip"></i>
  <button class="tb"><svg><use href="#i-node"/></svg></button><button class="dd"><svg><use href="#td"/></svg></button><button class="tb"><svg><use href="#i-line"/></svg></button><button class="tb"><svg><use href="#i-member"/></svg></button><button class="dd"><svg><use href="#td"/></svg></button><button class="tb"><svg><use href="#i-poly"/></svg></button><button class="dd"><svg><use href="#td"/></svg></button><i class="sep"></i>
  <button class="tb"><svg><use href="#i-sup"/></svg></button><button class="tb"><svg><use href="#i-sup2"/></svg></button><button class="tb"><svg><use href="#i-sup3"/></svg></button><i class="sep"></i>
  <button class="tb"><svg><use href="#i-dim"/></svg></button><button class="dd"><svg><use href="#td"/></svg></button><button class="tb"><svg><use href="#i-dimxx"/></svg></button><i class="sep"></i>
  <button class="tb"><svg><use href="#i-surf"/></svg></button><button class="dd"><svg><use href="#td"/></svg></button><button class="tb"><svg><use href="#i-surf2"/></svg></button><button class="dd"><svg><use href="#td"/></svg></button><button class="tb"><svg><use href="#i-open2"/></svg></button><button class="dd"><svg><use href="#td"/></svg></button><button class="tb"><svg><use href="#i-solid"/></svg></button><button class="dd"><svg><use href="#td"/></svg></button><button class="tb"><svg><use href="#i-solid2"/></svg></button><i class="sep"></i>
  <button class="tb"><svg><use href="#i-ld1"/></svg></button><button class="tb"><svg><use href="#i-ld2"/></svg></button><button class="tb"><svg><use href="#i-ld3"/></svg></button><button class="tb"><svg><use href="#i-ld4"/></svg></button><button class="tb"><svg><use href="#i-ld5"/></svg></button><button class="dd dim"><svg><use href="#td"/></svg></button><button class="tb"><svg><use href="#i-ld6"/></svg></button><button class="dd"><svg><use href="#td"/></svg></button>
  <i class="gsep"></i>
  <button class="tb"><svg><use href="#i-fwin"/></svg></button><i class="sep"></i>
  <button class="tb"><svg><use href="#i-defo"/></svg></button><button class="tb"><svg><use href="#i-film"/></svg></button><i class="sep"></i>
  <button class="tb"><svg><use href="#i-mom"/></svg></button><button class="tb on"><svg><use href="#i-iso"/></svg></button><button class="tb"><svg><use href="#i-dice"/></svg></button><button class="tb"><svg><use href="#i-reac"/></svg></button><button class="tb"><svg><use href="#i-sect"/></svg></button><i class="sep"></i>
  <button class="tb"><svg><use href="#i-w1"/></svg></button><button class="tb"><svg><use href="#i-w2"/></svg></button><button class="tb"><svg><use href="#i-w3"/></svg></button><button class="tb"><svg><use href="#i-w4"/></svg></button><button class="tb"><svg><use href="#i-w5"/></svg></button><button class="tb"><svg><use href="#i-w6"/></svg></button><i class="sep"></i>
  <button class="tb"><svg><use href="#i-pal"/></svg></button><button class="dd"><svg><use href="#td"/></svg></button>
  <i class="gsep"></i>
  <div class="combo w142"><i class="sw cyan"></i><select aria-label="Koordinatensystem"><option>1 - Global XYZ</option></select><svg class="chev"><use href="#chev"/></svg></div>
  <button class="tb"><svg><use href="#i-cs"/></svg></button><i class="sep"></i>
  <button class="tb"><svg><use href="#i-gh"/></svg></button><button class="tb"><svg><use href="#i-snap"/></svg></button><button class="tb on"><svg><use href="#i-pl1"/></svg></button><button class="tb"><svg><use href="#i-pl2"/></svg></button><button class="tb"><svg><use href="#i-pl3"/></svg></button><i class="sep"></i>
  <button class="tb"><svg><use href="#i-g1"/></svg></button><button class="tb"><svg><use href="#i-g2"/></svg></button><button class="tb"><svg><use href="#i-g3"/></svg></button><button class="more">»</button>
  <i class="gsep"></i>
  <button class="tb"><svg><use href="#i-meas"/></svg></button><button class="dd"><svg><use href="#td"/></svg></button>
  <button class="more end">»</button>
</div>

<div class="work">
<aside class="navigator">
  <div class="docktitle"><h2>Navigator - Ergebnisse</h2><button aria-label="Lösen"><svg><use href="#rest"/></svg></button><button aria-label="Schließen"><svg><use href="#cls"/></svg></button></div>
  <div class="navbody">
  <div class="navpick cgroup">
    <div class="combo grow"><svg class="ic16"><use href="#n-wood"/></svg><select aria-label="Modul"><option>Holzbemessung</option></select><svg class="chev"><use href="#chev"/></svg></div>
    <button class="step"><svg><use href="#tl"/></svg></button><button class="step off"><svg><use href="#tr"/></svg></button>
  </div>
  <div class="treebox first grow">
  <ul class="tree">
    <li><div class="row"><button class="tg open"></button><label><input type="checkbox" checked><span><svg><use href="#n-nach"/></svg>Nachweise</span></label></div>
    <ul>
      <li><div class="row"><button class="tg open"></button><label><input type="checkbox" checked><span><svg><use href="#n-flat"/></svg>An Flächen</span></label></div>
      <ul>
        <li><div class="row"><button class="tg open"></button><label><input type="checkbox"><span><svg><use href="#n-flat"/></svg>Ausnutzung der Umhüllenden</span></label></div>
        <ul>
          <li><div class="row"><button class="tg open"></button><label><input type="checkbox" checked><span><svg><use href="#n-flat"/></svg>Max. aller Werte</span></label></div>
          <ul>
            <li><div class="row"><i class="tg"></i><label><input type="radio" name="max" checked><span><svg><use href="#n-flat"/></svg>Max. aller Nachweise</span></label></div></li>
            <li><div class="row"><i class="tg"></i><label><input type="radio" name="max"><span><svg><use href="#n-flat"/></svg>Max. aller Nachweise ohne Feh...</span></label></div></li>
          </ul></li>
          <li><div class="row"><i class="tg"></i><label><input type="radio" name="max2"><span><svg><use href="#n-flat"/></svg>Max. aller selektierten Nachweise</span></label></div></li>
        </ul></li>
        <li><div class="row"><button class="tg open"></button><label><input type="checkbox" class="part"><span><svg><use href="#n-flat"/></svg>Schichten</span></label></div>
        <ul>
          <li><div class="row"><button class="tg open"></button><label><input type="checkbox" class="part"><span><i class="sw grey"></i>2 - Schichten <b class="vb">|</b> d : 500.0 mm <b class="vb">|</b> Schicht...</span></label></div>
          <ul>
            <li><div class="row"><i class="tg"></i><label><input type="radio" name="lay"><span><i class="sw orange"></i>1 : 1 - GL28c <b class="vb">|</b> Orthotrop <b class="vb">|</b> Linear ...</span></label></div></li>
            <li><div class="row"><i class="tg"></i><label><input type="radio" name="lay"><span><i class="sw orange"></i>2 : 1 - GL28c <b class="vb">|</b> Orthotrop <b class="vb">|</b> Linear ...</span></label></div></li>
            <li><div class="row"><i class="tg"></i><label><input type="radio" name="lay" checked><span class="sel"><i class="sw olive"></i>3 : 1 - GL28c <b class="vb">|</b> Orthotrop <b class="vb">|</b> Linear ...</span></label></div></li>
            <li><div class="row"><i class="tg"></i><label><input type="radio" name="lay"><span><i class="sw orange"></i>4 : 1 - GL28c <b class="vb">|</b> Orthotrop <b class="vb">|</b> Linear ...</span></label></div></li>
            <li><div class="row"><i class="tg"></i><label><input type="radio" name="lay"><span><i class="sw orange"></i>5 : 1 - GL28c <b class="vb">|</b> Orthotrop <b class="vb">|</b> Linear ...</span></label></div></li>
          </ul></li>
        </ul></li>
        <li><div class="row"><button class="tg open"></button><label><input type="checkbox" class="part"><span><svg><use href="#n-layer"/></svg>Schichtseite</span></label></div>
        <ul>
          <li><div class="row"><i class="tg"></i><label><input type="radio" name="side"><span><svg><use href="#n-layert"/></svg>Oben</span></label></div></li>
          <li><div class="row"><i class="tg"></i><label><input type="radio" name="side" checked><span><svg><use href="#n-layer"/></svg>Mitte</span></label></div></li>
          <li><div class="row"><i class="tg"></i><label><input type="radio" name="side"><span><svg><use href="#n-layer"/></svg>Unten</span></label></div></li>
        </ul></li>
        <li><div class="row"><button class="tg open"></button><label><input type="checkbox" class="part"><span><svg><use href="#n-flat"/></svg>Grenzzustand der Tragfähigkeit</span></label></div>
        <ul>
          <li><div class="row"><button class="tg open"></button><label><input type="checkbox" class="part"><span><svg><use href="#n-flat"/></svg>Grenzzustand der Tragfähigkeit</span></label></div>
          <ul>
            <li><div class="row"><i class="tg"></i><label><input type="radio" name="ul"><span><svg><use href="#n-flat"/></svg>UL0100.00 <b class="vb">|</b> Vernachlässigbare ...</span></label></div></li>
            <li><div class="row"><i class="tg"></i><label><input type="radio" name="ul"><span><svg><use href="#n-flat"/></svg>UL1100.00 <b class="vb">|</b> Zug in Faserrichtung</span></label></div></li>
            <li><div class="row"><i class="tg"></i><label><input type="radio" name="ul"><span><svg><use href="#n-flat"/></svg>UL1200.00 <b class="vb">|</b> Zug rechtwinklig z...</span></label></div></li>
            <li><div class="row"><i class="tg"></i><label><input type="radio" name="ul"><span><svg><use href="#n-flat"/></svg>UL1300.00 <b class="vb">|</b> Druck in Faserricht...</span></label></div></li>
            <li><div class="row"><i class="tg"></i><label><input type="radio" name="ul" checked><span><svg><use href="#n-flat"/></svg>UL3010.00 <b class="vb">|</b> Schub in yz-Ebene</span></label></div></li>
            <li><div class="row"><i class="tg"></i><label><input type="radio" name="ul"><span><svg><use href="#n-flat"/></svg>UL3020.00 <b class="vb">|</b> Schub in xz-Ebene</span></label></div></li>
            <li><div class="row"><i class="tg"></i><label><input type="radio" name="ul"><span><svg><use href="#n-flat"/></svg>UL3100.00 <b class="vb">|</b> Schub in xy-Ebene</span></label></div></li>
            <li><div class="row"><i class="tg"></i><label><input type="radio" name="ul"><span><svg><use href="#n-flat"/></svg>UL3400.00 <b class="vb">|</b> Schub in xz-Ebene ...</span></label></div></li>
            <li><div class="row"><i class="tg"></i><label><input type="radio" name="ul"><span><svg><use href="#n-flat"/></svg>UL3500.00 <b class="vb">|</b> Schub in yz-Ebene ...</span></label></div></li>
            <li><div class="row"><i class="tg"></i><label><input type="radio" name="ul"><span><svg><use href="#n-flat"/></svg>UL4100.00 <b class="vb">|</b> Biegung in Faserric...</span></label></div></li>
            <li><div class="row"><i class="tg"></i><label><input type="radio" name="ul"><span><svg><use href="#n-flat"/></svg>UL4200.00 <b class="vb">|</b> Biegung rechtwinkl...</span></label></div></li>
            <li><div class="row"><i class="tg"></i><label><input type="radio" name="ul"><span><svg><use href="#n-flat"/></svg>UL5100.00 <b class="vb">|</b> Biegung und Zug i...</span></label></div></li>
            <li><div class="row"><i class="tg"></i><label><input type="radio" name="ul"><span><svg><use href="#n-flat"/></svg>UL6100.00 <b class="vb">|</b> Biegung und Druck...</span></label></div></li>
          </ul></li>
        </ul></li>
        <li><div class="row"><button class="tg open"></button><label><input type="checkbox" class="part"><span><svg><use href="#n-flat"/></svg>Grenzzustand der Gebrauchstauglichkeit</span></label></div>
        <ul>
          <li><div class="row"><button class="tg shut"></button><label><input type="checkbox" class="part"><span><svg><use href="#n-flat"/></svg>Gebrauchstauglichkeit</span></label></div></li>
        </ul></li>
      </ul></li>
    </ul></li>
    <li><div class="row"><button class="tg open"></button><label><input type="checkbox"><span><svg><use href="#n-xx"/></svg>Werte an Flächen</span></label></div>
    <ul>
      <li><div class="row"><i class="tg"></i><label><input type="radio" name="val" checked><span><svg><use href="#n-xx"/></svg>Aktuelle Selektion</span></label></div></li>
      <li><div class="row"><button class="tg open"></button><label><input type="radio" name="val"><span><svg><use href="#n-xx"/></svg>Spezifisch</span></label></div>
      <ul>
        <li><div class="row"><button class="tg shut"></button><label><input type="checkbox" checked><span><svg><use href="#n-xx"/></svg>Grenzzustand der Tragfähigkeit</span></label></div></li>
        <li><div class="row"><button class="tg shut"></button><label><input type="checkbox" checked><span><svg><use href="#n-xx"/></svg>Grenzzustand der Gebrauchstauglichkeit</span></label></div></li>
      </ul></li>
    </ul></li>
    <li class="marked"><div class="row"><button class="tg open"></button><label><input type="checkbox" checked><span><svg><use href="#n-sect"/></svg>Ergebnisschnitte</span></label></div>
    <ul>
      <li><div class="row"><i class="tg"></i><label><input type="checkbox" checked><span><i class="sw cyan"></i>1 - Schnitt 1</span></label></div></li>
      <li><div class="row"><i class="tg"></i><label><input type="checkbox" checked><span><i class="sw gold"></i>2 - Schnitt 2</span></label></div></li>
      <li><div class="row"><i class="tg"></i><label><input type="checkbox" checked><span><i class="sw rose"></i>3 - Schnitt 3</span></label></div></li>
    </ul><i class="frame nodeframe"></i></li>
  </ul>
  </div>
  <div class="treebox second">
  <ul class="tree">
    <li><div class="row"><button class="tg shut"></button><label><input type="checkbox" checked><span><svg><use href="#n-val"/></svg>Ergebniswerte</span></label></div></li>
    <li><div class="row"><i class="tg"></i><label><input type="checkbox" checked><span><svg><use href="#n-eye"/></svg>Titelinformationen</span></label></div></li>
    <li><div class="row"><i class="tg"></i><label><input type="checkbox" checked><span><svg><use href="#n-eye"/></svg>Max/Min-Informationen</span></label></div></li>
    <li><div class="row"><button class="tg shut"></button><label><input type="checkbox" class="part"><span><svg><use href="#n-eye"/></svg>Verformung</span></label></div></li>
    <li><div class="row"><button class="tg shut"></button><label><input type="checkbox" class="part"><span><svg><use href="#n-eye"/></svg>Stäbe</span></label></div></li>
    <li><div class="row"><button class="tg shut"></button><label><input type="checkbox" class="part"><span><svg><use href="#n-eye"/></svg>Werte an Flächen</span></label></div></li>
    <li><div class="row"><button class="tg shut"></button><label><input type="checkbox" class="part"><span><svg><use href="#n-rain"/></svg>Darstellungsart</span></label></div></li>
    <li><div class="row"><button class="tg shut"></button><label><input type="checkbox" class="part"><span><svg><use href="#n-eye"/></svg>Ergebnisschnitte</span></label></div></li>
    <li><div class="row"><button class="tg shut"></button><label><input type="checkbox" class="part"><span><svg><use href="#n-eye"/></svg>Skalierung der Eigenformen</span></label></div></li>
  </ul>
  </div>
  <div class="navtabs"><button aria-label="Daten"><svg class="ic16"><use href="#n-data"/></svg></button><button aria-label="Zeigen"><svg class="eyeic"><use href="#eye"/></svg></button><button aria-label="Ansichten"><svg class="ic16"><use href="#n-cam"/></svg></button><button class="act" aria-label="Ergebnisse"><svg class="wedgeic"><use href="#wedge"/></svg></button></div>
  </div>
</aside>

<main class="main">
<section class="view">
  <svg class="scene" viewBox="320 107 1279 754" preserveAspectRatio="xMinYMin slice">
    <defs>
      <linearGradient id="gBlue" x1="0" y1="0" x2="1" y2="1"><stop offset="0" stop-color="#b4d4f0"/><stop offset="1" stop-color="#4a78b0"/></linearGradient>
      <linearGradient id="gRain" x1="0" y1="0" x2="1" y2="1"><stop offset="0" stop-color="#0020d0"/><stop offset=".3" stop-color="#00c8ff"/><stop offset=".5" stop-color="#20e020"/><stop offset=".72" stop-color="#ffe600"/><stop offset="1" stop-color="#e01000"/></linearGradient>
      <g id="sup" fill="#1fa808"><path d="M-14 19l5-10 10-2 13 7-7 8z" fill-opacity=".75"/><path d="M-5 3q5-6 10 0v9q-5 4-10 0z" fill-opacity=".9"/><ellipse cy="10" rx="5" ry="3" fill="#14cc00" fill-opacity=".6"/><path d="M-4 15h8v12q-4 3-8 0z" fill="#18b404" fill-opacity=".8"/></g>
      <g id="bigsup"><path d="M-12 14L-20 27 8 31 20 20 8 13z" fill="#2fd038" fill-opacity=".9"/><path d="M8 31L6 15l14 5z" fill="#5ce060" fill-opacity=".7"/><path d="M-7 3q7-8 14 0v11q-7 5-14 0z" fill="#18c818"/></g>
    </defs>
    <path d="M384 524L583 301 1599 434V684z" fill="#c9b197"/>
    <g stroke="#8d8b8b" stroke-width="1" fill="none">
      <path d="M680 314L481 537M777 326L578 549M874 339L675 562M1068 364L869 588M1165 377L966 600M1262 390L1063 613M1456 415L1257 639M1553 428L1354 651M1650 440L1451 664M1747 453L1548 677"/>
      <path d="M417 487L1599 642M450 450L1599 600M517 375L1599 517M550 338L1599 476"/>
    </g>
    <path d="M384 524L583 301" stroke="#8a8a8a"/><path d="M384 524L1599 684" stroke="#666"/>
    <path d="M583 301L1599 434" stroke="#58e858" stroke-width="1.500"/>
    <g fill="none" stroke-width="1">
      <path d="M415 488C450 493 500 493 530 494 580 498 612 505 611 514 612 528 602 538 593 552" stroke="#4840b0"/>
      <path d="M413 492C450 495 500 501 518 510 540 522 552 530 552 546" stroke="#4848f0"/>
      <path d="M409 497C440 497 470 503 486 508 505 517 514 528 522 542" stroke="#4890f0"/>
      <path d="M405 500C440 503 465 510 474 517 484 524 490 530 498 539" stroke="#50e0e8"/>
      <path d="M405 505C440 508 460 518 476 536" stroke="#48d878"/>
      <path d="M399 508C425 511 440 518 460 533" stroke="#60e828"/>
      <path d="M405 512Q425 517 443 531" stroke="#f8f030" stroke-width="1.500"/>
      <path d="M405 520l20 8" stroke="#e8a020"/>
      <path d="M816 581C880 550 930 535 970 517 1010 500 1060 486 1100 476 1150 460 1250 456 1315 452" stroke="#4038b0"/>
      <path d="M921 594C960 584 1000 578 1034 567 1080 553 1160 522 1266 506" stroke="#4444e8"/>
      <path d="M1032 608C1060 603 1100 594 1204 578" stroke="#4898f0"/>
      <path d="M1134 622L1168 617" stroke="#40d8e0"/>
      <path d="M1228 550C1246 568 1262 586 1260 598 1258 608 1242 622 1231 635" stroke="#4038b0"/>
    </g>
    <path d="M384 524L505 510V525L484 539 384 605z" fill="#dde5de" fill-opacity=".55"/>
    <g stroke="#3f8f3f" stroke-opacity=".85" stroke-width="1" fill="#b4ccb4" fill-opacity=".45">
      <path d="M484 413L1259 515V530L1162 513 1065 496 968 480 871 464 677 440 580 427z"/>
      <path d="M1259 515L1599 559V563L1259 519z"/>
      <path d="M505 510L1313 409V413L1237 421 1115 436 993 450 871 464 710 484 628 499 547 513 505 525z"/>
      <path d="M384 605V524L505 510M505 525L484 539 384 605" fill="none" stroke-opacity=".6"/>
      <path d="M971 353L772 579 803 539 838 502 906 427 938 388z"/>
      <path d="M580 425v3M677 438v3M968 476v4M1065 489v7M1162 502v11M547 504v9M628 493v6M1034 444v3M1115 433v3M1195 424v2M1237 418v3" fill="none"/>
    </g>
    <path d="M1159 626L1315 452" stroke="#58e040" stroke-width="1.200"/>
    <g stroke="#aaa" stroke-width="1.300" stroke-dasharray="9 3 2 3" fill="none"><path d="M484 425V552M971 365V492" stroke-opacity=".35"/><path d="M384 622V665M772 598V716"/></g>
    <g fill="#9a9a9a"><path d="M480 553h8l-4 11zM380 666h8l-4 10zM768 716h8l-4 10z"/><path d="M967 493h8l-4 10z" fill="#8a705c"/></g>
    <use href="#sup" x="631" y="307"/><use href="#sup" x="728" y="320"/><use href="#sup" x="825" y="333"/><use href="#sup" x="922" y="346"/><use href="#sup" x="1019" y="358"/><use href="#sup" x="1116" y="371"/><use href="#sup" x="1213" y="384"/><use href="#sup" x="1310" y="396"/><use href="#sup" x="1601" y="434"/>
    <use href="#sup" x="1309" y="459"/><use href="#sup" x="1275" y="496"/><use href="#sup" x="1242" y="533"/><use href="#sup" x="1209" y="570"/><use href="#sup" x="1176" y="607"/>
    <use href="#bigsup" x="384" y="524"/><use href="#bigsup" x="1160" y="625"/>
    <circle cx="583" cy="301" r="2.500" fill="#f01010"/><circle cx="1159" cy="626" r="2.500" fill="#f01010"/>
    <g fill="#108010"><circle cx="384" cy="605" r="2.500"/><circle cx="772" cy="579" r="2.500"/></g>
    <g fill="#5e8a5e"><circle cx="938" cy="388" r="2"/><circle cx="1259" cy="530" r="2"/></g>
    <g stroke-width="3"><path d="M384 524l10-12" stroke="#f07060"/><path d="M391 518l3-10 6-2-1 6z" fill="#f04040"/><path d="M384 524l26 3" stroke="#10c010"/><path d="M409 522l11 6-12 4z" fill="#10b810"/><path d="M384 524v24" stroke="#101080"/><path d="M380 547h8l-4 13z" fill="#101080"/><circle cx="384" cy="524" r="4" fill="#f8e000"/></g>
    <g fill="#e8e0dc" fill-opacity=".75"><path d="M461 395h45v16h-45zM362 507h42v14h-42zM750 558h43v15h-43z"/></g>
    <g class="lbl"><text x="461" y="407">Schnitt 3</text><text x="362" y="519">Schnitt 1</text><text x="750" y="570">Schnitt 2</text></g>
    <g class="val"><text x="369" y="618">0.818</text><text x="757" y="593">0.047</text><text x="923" y="402">0.004</text><text x="858" y="478">0.01</text><text x="1245" y="543">0.158</text></g>
    <g class="ax"><text x="397" y="509" fill="#f01010">X</text><text x="428" y="534" fill="#10a810">Y</text><text x="380" y="574" fill="#101080">Z</text><text x="391" y="754" fill="#f01010">X</text><text x="423" y="778" fill="#10a810">Y</text><text x="375" y="818" fill="#101080">Z</text></g>
    <g stroke-width="3"><path d="M379 768l9-12" stroke="#f01010"/><path d="M384 759l4-7 6-1 0 5-5 6z" fill="#f01010"/><path d="M379 768l29 4" stroke="#10c010"/><path d="M406 767l11 6-12 4z" fill="#10c010"/><path d="M379 768v26" stroke="#101080"/><path d="M375 793h8l-4 12z" fill="#101080"/><circle cx="379" cy="768" r="4" fill="#f8e000"/></g>
  </svg>
  <i class="frame viewframe"></i>
  <p class="note top">Holzbemessung<br>Flächen | Nachweiskriterium UL3010.00 | Schub in yz-Ebene</p>
  <p class="note bottom">Flächen | max UL3010.00 | Schub in yz-Ebene : 0.818 | min UL3010.00 | Schub in yz-Ebene : 0.001<br>Ergebnisschnitte | max η : 0.818 | min η : 0.001</p>
  <svg class="cube" viewBox="0 0 90 100" stroke="#6e6a6a" stroke-width="1.500" stroke-linejoin="round">
    <path d="M1 26L24 1 89 10 66 34z" fill="#8c8c8c"/><path d="M66 34L89 10V72L66 98z" fill="#848484"/><path d="M1 26L66 34V98L1 90z" fill="#d0d0d0"/>
    <path d="M17 28v64M50 32v64M1 43l65 7M1 73l65 8M17 28L41 4M50 32L73 8M7 19l65 9M17 8l65 9M72 28v64M83 17v62M66 50l23-23M66 80l23-23" fill="none" stroke-width="1.800"/>
    <text x="24" y="68" class="t13b" fill="#f03838" stroke="none">+X</text>
    <path d="M42 15l9 2-6 3 8 1" fill="none" stroke="#484890" stroke-width="2.500"/><path d="M75 60l5-11M76 50l2 6" stroke="#4c8a4c" stroke-width="2"/>
  </svg>

  <aside class="panel">
    <div class="ptitle"><h2>Steuerpanel</h2><button aria-label="Schließen">x</button></div>
    <p class="phead">Holzbemessung <b class="vb">|</b> Nachweise nach Flächen</p>
    <div class="legend">
      <ol class="lv"><li>0.818</li><li>0.744</li><li>0.670</li><li>0.595</li><li>0.521</li><li>0.447</li><li>0.372</li><li>0.298</li><li>0.224</li><li>0.150</li><li>0.075</li><li>0.001</li></ol>
      <div class="lc"><i class="c1"></i><i class="c2"></i><i class="c3"></i><i class="c4"></i><i class="c5"></i><i class="c6"></i><i class="c7"></i><i class="c8"></i><i class="c9"></i><i class="c10"></i><i class="c11"></i></div>
      <ol class="lp"><li>0.68 %</li><li>1.36 %</li><li>2.03 %</li><li>2.73 %</li><li>3.45 %</li><li>4.25 %</li><li>6.49 %</li><li>13.24 %</li><li>23.06 %</li><li>42.71 %</li><li>0.00 %</li></ol>
      <div class="range"><input type="range" aria-label="Maximum" min="0" max="100" value="0"><input type="range" aria-label="Minimum" min="0" max="100" value="100"></div>
    </div>
    <div class="pbtns"><button aria-label="Optionen"><svg class="ic18"><use href="#i-opt"/></svg></button><button class="act" aria-label="Skala"><svg viewBox="0 0 18 18"><path d="M2 1h4v16H2zM12 1h4v16h-4z" fill="#ccc"/><path d="M2 1h4v2H2z" fill="#1030c0"/><path d="M2 12h4v2H2z" fill="#f0c000"/><path d="M2 14h4v3H2z" fill="#e02020"/><path d="M12 5h4v8h-4z" fill="#20d860"/><path d="M1 4h6M1 11h6M11 4h6M11 14h6" stroke="#2060c0"/></svg></button></div>
    <div class="ptabs"><button class="act" aria-label="Farbskala"><svg class="ic16"><use href="#n-leg"/></svg></button><button aria-label="Faktoren"><svg class="ic16"><use href="#n-scale"/></svg></button><button aria-label="Filter"><svg class="ic16"><use href="#n-rep"/></svg></button></div>
  </aside>
</section>

<section class="dock">
  <div class="docktitle"><h2>Ausnutzung an Flächen nach Bauzustand <b class="vb">|</b> Holzbemessung <b class="vb">|</b> EN 1995 <b class="vb">|</b> CEN <b class="vb">|</b> 2014-05</h2><button aria-label="Lösen"><svg><use href="#rest"/></svg></button><button aria-label="Schließen"><svg><use href="#cls"/></svg></button></div>
  <nav class="dockmenu"><button>Gehe zu</button><button>Bearbeiten</button><button>Selektion</button><button>Ansicht</button><button>Einstellungen</button></nav>
  <div class="toolbar docktb">
    <div class="cgroup"><div class="combo w200"><svg class="ic16"><use href="#n-wood"/></svg><select aria-label="Modul"><option>Holzbemessung</option></select><svg class="chev"><use href="#chev"/></svg></div><button class="step"><svg><use href="#tl"/></svg></button><button class="step"><svg><use href="#tr"/></svg></button></div>
    <i class="gsep plain"></i>
    <div class="cgroup"><div class="combo w270"><svg class="ic16"><use href="#n-flat"/></svg><select aria-label="Tabelle"><option>Ausnutzungen an Flächen</option></select><svg class="chev"><use href="#chev"/></svg></div><button class="step"><svg><use href="#tl"/></svg></button><button class="step"><svg><use href="#tr"/></svg></button></div>
    <i class="sep"></i>
    <button class="tb on"><svg><use href="#i-b1"/></svg></button><button class="tb on"><svg><use href="#i-b2"/></svg></button><i class="bar"></i>
    <button class="tb on"><svg><use href="#i-reseye"/></svg></button><button class="tb on"><svg><use href="#i-resxx"/></svg></button><i class="sep"></i>
    <button class="tb"><svg><use href="#i-tg"/></svg></button><button class="tb"><svg><use href="#i-tr"/></svg></button><button class="tb"><svg><use href="#i-tr"/></svg></button><i class="sep"></i>
    <button class="tb on"><svg><use href="#i-bars"/></svg></button><i class="sep"></i><button class="tb"><svg><use href="#i-xls"/></svg></button><i class="sep"></i>
    <button class="tb"><svg><use href="#i-fwin"/></svg></button><button class="tb"><svg><use href="#i-dec"/></svg></button><i class="sep"></i>
    <button class="tb"><svg><use href="#i-curx"/></svg></button><i class="sep"></i><button class="tb"><svg><use href="#i-help"/></svg></button><i class="bar"></i>
    <button class="tb"><svg><use href="#i-mag"/></svg></button><button class="tb"><svg><use href="#i-sw"/></svg></button><button class="tb"><svg><use href="#i-info"/></svg></button><button class="tb"><svg><use href="#i-w2"/></svg></button>
    <button class="tb on"><svg><use href="#i-fw"/></svg></button><button class="tb on"><svg><use href="#i-fr"/></svg></button><button class="tb"><svg><use href="#i-fg"/></svg></button>
    <button class="more end">»</button>
  </div>
  <div class="tablebox">
  <div class="tableclip">
  <table>
    <colgroup><col class="w60"><col class="w60"><col class="w80"><col class="w80"><col class="w80"><col class="w80"><col class="w60"><col class="w60"><col class="w60"><col class="w108"><col class="w100"><col class="w800"></colgroup>
    <thead>
      <tr class="strip"><td></td><td></td><td></td><td></td><td></td><td></td><td></td><td></td><td></td><td class="hot"></td><td></td><td></td></tr>
      <tr><th rowspan="2" class="first">Bau-<br>zustand</th><th rowspan="2">Fläche<br>Nr.</th><th rowspan="2">Netzknoten /<br>Element Nr.</th><th colspan="3" class="span">Netzknoten-Koordinaten [m]</th><th rowspan="2">Bemess.<br>Situation</th><th colspan="2" class="span">Schicht</th><th rowspan="2">Nachweis-<br>Kriterium η [--]</th><th rowspan="2">Nachweis-<br>Art</th><th class="span"></th></tr>
      <tr><th>X</th><th>Y</th><th>Z</th><th>Nr.</th><th>Seite</th><th>Beschreibung</th></tr>
    </thead>
    <tbody>
      <tr class="grp"><td class="first"></td><td colspan="11">Maßgebende Nachweise ohne zugeordneten Bauzustand</td></tr>
      <tr><td class="first"></td><td>3</td><td>10</td><td class="r">0.000</td><td class="r">8.000</td><td class="r">0.000</td><td>BS1</td><td>1</td><td class="l">Oben</td><td class="k"><div><i class="trk"></i><b>0.000</b><svg><use href="#n-chk"/></svg></div></td><td class="m">UL0100.00</td><td class="l">Grenzzustand der Tragfähigkeit | Vernachlässigbare Spannungen</td></tr>
      <tr><td class="first"></td><td>2</td><td>6</td><td class="r">0.000</td><td class="r">4.000</td><td class="r">0.000</td><td>BS1</td><td>1</td><td class="l">Oben</td><td class="k"><div><i class="trk"></i><b>0.003</b><svg><use href="#n-chk"/></svg></div></td><td class="m">UL1100.00</td><td class="l">Grenzzustand der Tragfähigkeit | Zug in Faserrichtung</td></tr>
      <tr><td class="first"></td><td></td><td></td><td class="r">0.000</td><td class="r">4.000</td><td class="r">0.000</td><td>BS1</td><td>2</td><td class="l">Oben</td><td class="k"><div><i class="trk"></i><b>0.003</b><svg><use href="#n-chk"/></svg></div></td><td class="m">UL1200.00</td><td class="l">Grenzzustand der Tragfähigkeit | Zug rechtwinklig zur Faserrichtung</td></tr>
      <tr><td class="first"></td><td>3</td><td>6</td><td class="r">0.000</td><td class="r">4.000</td><td class="r">0.000</td><td>BS1</td><td>1</td><td class="l">Oben</td><td class="k"><div><i class="trk"></i><b>0.003</b><svg><use href="#n-chk"/></svg></div></td><td class="m">UL1300.00</td><td class="l">Grenzzustand der Tragfähigkeit | Druck in Faserrichtung</td></tr>
      <tr><td class="first hot"></td><td>2</td><td>5</td><td class="r">0.000</td><td class="r">0.000</td><td class="r">0.000</td><td>BS1</td><td>3</td><td class="l">Mitte</td><td class="k cur"><div><i class="trk"><i style="width:82%"></i></i><b>0.818</b><svg><use href="#n-chk"/></svg></div></td><td class="m">UL3010.00</td><td class="l">Grenzzustand der Tragfähigkeit | Schub in yz-Ebene</td></tr>
      <tr><td class="first"></td><td></td><td></td><td class="r">0.000</td><td class="r">0.000</td><td class="r">0.000</td><td>BS1</td><td>2</td><td class="l">Unten</td><td class="k"><div><i class="trk"><i style="width:28%"></i></i><b>0.280</b><svg><use href="#n-chk"/></svg></div></td><td class="m">UL3020.00</td><td class="l">Grenzzustand der Tragfähigkeit | Schub in xz-Ebene</td></tr>
      <tr><td class="first"></td><td></td><td>3</td><td class="r">0.500</td><td class="r">0.500</td><td class="r">0.000</td><td>BS1</td><td>1</td><td class="l">Oben</td><td class="k"><div><i class="trk"><i style="width:11%"></i></i><b>0.110</b><svg><use href="#n-chk"/></svg></div></td><td class="m">UL3100.00</td><td class="l">Grenzzustand der Tragfähigkeit | Schub in xy-Ebene</td></tr>
      <tr><td class="first"></td><td></td><td>5</td><td class="r">0.000</td><td class="r">0.000</td><td class="r">0.000</td><td>BS1</td><td>4</td><td class="l">Oben</td><td class="k"><div><i class="trk"><i style="width:8%"></i></i><b>0.078</b><svg><use href="#n-chk"/></svg></div></td><td class="m">UL3400.00</td><td class="l">Grenzzustand der Tragfähigkeit | Schub in xz-Ebene und xy-Ebene</td></tr>
      <tr><td class="first"></td><td>3</td><td>7</td><td class="r">3.000</td><td class="r">4.000</td><td class="r">0.000</td><td>BS1</td><td>3</td><td class="l">Mitte</td><td class="k"><div><i class="trk"><i style="width:5%"></i></i><b>0.048</b><svg><use href="#n-chk"/></svg></div></td><td class="m">UL3500.00</td><td class="l">Grenzzustand der Tragfähigkeit | Schub in yz-Ebene und Zug rechtwinklig zur Faserrichtung</td></tr>
    </tbody>
  </table>
  </div>
  <div class="vscroll"><i></i></div>
  <div class="hscroll"><i></i></div>
  </div>
  <div class="sheets">
    <button class="pg off"><svg viewBox="0 0 10 8"><path d="M1 0h2v8H1zM9 0v8L4 4z"/></svg></button><button class="pg off"><svg viewBox="0 0 10 8"><path d="M7 0v8L2 4z"/></svg></button><span class="pgno">1 von 7</span><button class="pg"><svg viewBox="0 0 10 8"><path d="M3 0v8l5-4z"/></svg></button><button class="pg"><svg viewBox="0 0 10 8"><path d="M1 0v8l5-4zM7 0h2v8H7z"/></svg></button>
    <div class="tabs"><button class="act">Ausnutzungen nach Bauzustand</button><button>Ausnutzungen nach Bemessungssituation</button><button>Ausnutzungen belastungsweise</button><button>Ausnutzungen materialweise</button><button>Ausnutzungen dickenweise</button><button>Ausnutzungen flächenweise</button><button>Ausnutzungen</button></div>
    <button class="pg big off"><svg><use href="#tl"/></svg></button><button class="pg big"><svg><use href="#tr"/></svg></button>
  </div>
</section>
</main>
</div>
<footer class="status">
  <div class="modes"><button class="in">FANG</button><button>RASTER</button><button class="in">LRASTER</button><button class="in">OFANG</button></div>
  <span class="s106"></span><span class="s156">KS: Global XYZ</span><span class="s66">Ebene: XY</span><span class="s76">X: -1.649 m</span><span class="s76">Y: 4.164 m</span><span class="s76">Z: 0.000 m</span><span class="s20"></span>
</footer>
</div>
</body>
</html>
```
FILE: styles.css
```css
* { box-sizing: border-box; }
html, body { height: 100%; }
body { margin: 0; font-family: "Open Sans", "Noto Sans", sans-serif; font-size: 11px; line-height: 16px; color: #000; background: #f7f7f7; overflow: hidden; }
button, select, input { font: inherit; color: inherit; margin: 0; padding: 0; border: 0; background: none; }
h1, h2, p, ul, ol { margin: 0; padding: 0; font-size: inherit; font-weight: inherit; }
ul, ol { list-style: none; }
i { font-style: normal; }
svg { display: block; flex: none; }
.sprite { display: none; }
.vb { font-family: "Liberation Sans", sans-serif; font-weight: normal; line-height: 1; }
.t16 { font: bold 16px "Open Sans", sans-serif; }
.t8b { font: bold 8px "Open Sans", sans-serif; }
.t7b { font: bold 7px "Open Sans", sans-serif; }
.t9b { font: bold 9px "Open Sans", sans-serif; }
.t10b { font: bold 10px "Open Sans", sans-serif; }
.t10 { font: 10px "Open Sans", sans-serif; }
.t13b { font: bold 14px "Open Sans", sans-serif; }
.ic16 { width: 16px; height: 16px; }
.ic18 { width: 18px; height: 18px; }
.grow { flex: 1; min-width: 0; }

.window { height: 100%; display: flex; flex-direction: column; border: 1px solid #a6a6aa; border-bottom-color: #2c2c34; border-radius: 8px 8px 6px 6px; overflow: hidden; }
.titlebar { display: flex; align-items: center; height: 30px; flex: none; background: #eef3fb; padding: 0 2px 0 6px; }
.titlebar h1 { font-size: 12px; margin-left: 5px; flex: 1; }
.winbtns button { width: 45px; height: 28px; }
.winbtns svg { width: 12px; height: 12px; margin: auto; }
.winbtns { display: flex; }
.menubar { display: flex; align-items: center; height: 20px; flex: none; }
.menubar .flag { width: 16px; height: 12px; }
.menubar button { padding: 0 8px; }
.license { margin-left: auto; padding-right: 8px; }
.menubar .mini { padding: 0 4px; width: 18px; height: 18px; }
.menubar .mini svg { width: 10px; height: 10px; }

.toolbar { display: flex; align-items: center; gap: 2px; height: 28px; flex: none; border-top: 1px solid #dedede; padding: 0 2px 2px 1px; }
.toolbar > * { flex: none; }
.grip, .gsep { width: 9px; height: 27px; background: radial-gradient(circle, #b4b4b4 1px, transparent 1px) right 2px top 3px / 3px 4px repeat-y; }
.grip { width: 7px; background-position: 3px 3px; background-clip: content-box; padding: 4px 0; }
.gsep { border-left: 1px solid #d6d6d6; }
.gsep.plain { width: 8px; background: none; }
.sep { width: 5px; height: 18px; background: linear-gradient(#c8c8c8, #c8c8c8) center / 1px 100% no-repeat; }
.bar { width: 1px; height: 27px; background: #d6d6d6; }
.tb { width: 24px; height: 23px; border-radius: 2px; display: grid; place-items: center; }
.tb svg { width: 20px; height: 20px; }
.tb.on, .dd.on { background: #cce6fb; box-shadow: inset 0 0 0 1px #96cdf5; }
.dd { width: 10px; height: 23px; display: grid; place-items: center; }
.dd svg { width: 8px; height: 5px; }
.dd.dim { fill: #666; }
.split { display: flex; }
.split .dd { width: 12px; }
.more { width: 10px; color: #444; font-size: 14px; }
.end { margin-left: auto; }
.cgroup { display: flex; gap: 1px; margin-right: 1px; }
.combo { display: flex; align-items: center; height: 21px; background: #e7e6f2; padding: 0 4px; }
.combo select { flex: 1; min-width: 0; appearance: none; outline: 0; margin-left: 4px; height: 20px; }
.combo .chev { width: 10px; height: 10px; margin-right: 2px; }
.combo .sw { margin: 0 2px 0 1px; }
.w270 { width: 270px; }
.w200 { width: 200px; }
.w142 { width: 142px; }
.step { width: 14px; height: 21px; background: #e7e6f2; display: grid; place-items: center; }
.step svg { width: 6px; height: 8px; }
.step.off { background: #d4d4d4; fill: #666; }
.tag { background: #c96c6a; color: #fff; width: 30px; line-height: 14px; text-align: center; }
.bs { width: 55px; margin-left: 5px; border-right: 1px solid #fff; }
.sw { width: 11px; height: 11px; flex: none; }
.cyan { background: #ccffff; }
.grey { background: #808080; }
.orange { background: #ffaa00; }
.olive { background: #b09a3c; }
.gold { background: #f5c400; }
.rose { background: #bc7070; }

.work { flex: 1; min-height: 0; display: grid; grid-template-columns: 314px minmax(0, 1fr); gap: 4px; padding-left: 1px; }
.docktitle { display: flex; align-items: center; height: 21px; flex: none; background: #d9e5f2; padding: 0 3px 0 5px; color: #3c4248; }
.docktitle h2 { flex: 1; font-weight: 700; }
.docktitle button { width: 21px; height: 20px; display: grid; place-items: center; }
.docktitle svg { width: 10px; height: 10px; }
.navigator { display: flex; flex-direction: column; min-height: 0; padding-bottom: 1px; }
.navbody { flex: 1; min-height: 0; display: flex; flex-direction: column; margin-top: 1px; border: 2px solid #c8c7d2; }
.navpick { padding: 2px 0 9px 2px; }
.navpick .step { width: 15px; }
.treebox { background: #fff; min-height: 0; padding-top: 1px; }
.treebox.first { padding-top: 2px; }
.second { margin-top: 5px; padding-bottom: 5px; }
.tree ul { padding-left: 20px; }
.row { display: flex; align-items: center; height: 18px; padding-left: 3px; overflow: hidden; white-space: nowrap; }
.tg { width: 12px; height: 12px; margin: 0 6px 4px 0; flex: none; }
.tg.open::after, .tg.shut::after { content: ""; display: block; width: 6px; height: 6px; margin: 1px 3px; border: solid #333; border-width: 0 2px 2px 0; transform: rotate(45deg); }
.tg.shut::after { border-color: #888; margin: 4px 2px; transform: rotate(-45deg); }
.row label { display: flex; align-items: center; flex: 1; min-width: 0; }
.row label > span { flex: 1; height: 18px; line-height: 18px; margin-left: 2px; padding-left: 3px; }
.row span.sel { background: #cce8ff; }
.row label svg { display: inline-block; width: 16px; height: 16px; margin-right: 5px; vertical-align: -3px; }
.row .sw { display: inline-block; margin-right: 5px; vertical-align: -1px; }
.row input { appearance: none; width: 13px; height: 13px; margin-bottom: 4px; flex: none; border: 1px solid #333; background: #fff; display: grid; place-items: center; }
.row input[type=radio] { border-radius: 50%; }
.row input[type=radio]:checked::after { content: ""; width: 7px; height: 7px; border-radius: 50%; background: #333; }
.row input[type=checkbox]:checked::after { content: ""; width: 9px; height: 5px; margin-bottom: 3px; border: solid #333; border-width: 0 0 1px 1px; transform: rotate(-45deg); }
.row input.part { background: #cce4f7; border-color: #1a64a8; }
.marked { position: relative; }
.frame { position: absolute; border: 3px solid #0cb090; filter: drop-shadow(1px 4px 2px rgba(0, 0, 0, .4)); pointer-events: none; }
.nodeframe { left: 3px; top: -6px; width: 177px; height: 83px; }
.navtabs { display: flex; height: 25px; flex: none; border-top: 2px solid #c8c7d2; }
.navtabs button { width: 38px; height: 23px; border-right: 2px solid #c8c7d2; background: #efeff0; display: grid; place-items: center; border-bottom: 2px solid #c8c7d2; }
.navtabs .act { width: 39px; background: #fff; margin-top: -2px; height: 26px; border-bottom: 0; }
.eyeic { width: 14px; height: 10px; }
.wedgeic { width: 17px; height: 8px; }

.main { display: flex; flex-direction: column; min-height: 0; }
.view { position: relative; flex: 1; min-height: 0; background: #fff; overflow: hidden; margin-bottom: 4px; }
.scene { position: absolute; width: 100%; height: 100%; }
.lbl { font: 11px "Liberation Sans", sans-serif; fill: #606060; }
.val { font: 11px "Open Sans", sans-serif; fill: #008000; }
.ax { font: 11px "Open Sans", sans-serif; }
.viewframe { left: 23px; top: 262px; width: 541px; height: 366px; }
.note { position: absolute; left: 5px; line-height: 17px; }
.note.top { top: 4px; }
.note.bottom { bottom: 4px; }
.cube { position: absolute; right: 22px; top: 18px; width: 90px; height: 100px; }
.panel { position: absolute; right: 40px; top: 208px; width: 245px; background: #fff; border: 2px solid #c6c6cf; border-radius: 5px 5px 3px 3px; box-shadow: 0 4px 10px rgba(0, 0, 0, .15); }
.ptitle { display: flex; height: 30px; background: #f2f2f2; border-bottom: 2px solid #c6c6cf; align-items: center; }
.ptitle h2 { font-size: 12px; color: #909090; flex: 1; margin-left: 8px; }
.ptitle button { width: 19px; height: 19px; background: #dadada; color: #fff; align-self: end; }
.phead { height: 40px; padding-top: 3px; text-align: center; }
.legend { display: flex; height: 341px; background: #f6f6f6; padding: 6px 0 0 46px; }
.legend li { height: 26px; line-height: 26px; }
.lv { width: 28px; }
.lc { width: 41px; margin: 13px 0 0 12px; }
.lc i { display: block; height: 25px; margin-bottom: 1px; }
.lp { width: 51px; margin-top: 13px; text-align: right; }
.c1 { background: #bc0000; } .c2 { background: #dc8000; } .c3 { background: #ffaa00; } .c4 { background: #d0d000; }
.c5 { background: #ffff00; } .c6 { background: #00ff00; } .c7 { background: #00e888; } .c8 { background: #00f8f8; }
.c9 { background: #0098ff; } .c10 { background: #0000ff; } .c11 { background: #0000a0; }
.range { position: relative; width: 21px; height: 297px; margin: 6px 0 0 7px; background: linear-gradient(#dfe5e8, #dfe5e8) center / 4px 100% no-repeat; }
.range input { position: absolute; left: 0; top: 0; width: 21px; height: 297px; appearance: none; writing-mode: vertical-lr; pointer-events: none; }
.range input::-webkit-slider-thumb { appearance: none; width: 21px; height: 10px; background: #0078d7; pointer-events: auto; }
.pbtns { display: flex; justify-content: flex-end; gap: 6px; padding: 5px 6px 6px; }
.pbtns button { width: 25px; height: 22px; background: #cce4f7; display: grid; place-items: center; }
.pbtns .act { border: 1px solid #005499; }
.pbtns .act svg { width: 16px; height: 18px; }
.ptabs { display: flex; background: #f7f7f7; height: 25px; border-top: 2px solid #c6c6cf; }
.ptabs button { width: 38px; height: 22px; background: #efeff0; border: solid #c6c6cf; border-width: 0 2px 2px 0; display: grid; place-items: center; }
.ptabs .act { background: #fff; border-bottom: 0; margin-top: -2px; height: 25px; }

.dock { flex: none; }
.dockmenu { display: flex; height: 20px; align-items: center; padding-top: 2px; }
.dockmenu button { padding: 0 8px; }
.docktb { padding-left: 2px; }
.tablebox { display: grid; grid-template-columns: minmax(0, 1fr) 17px; border: solid #c8c7d2; border-width: 1px 0 0 1px; }
.tableclip { overflow: hidden; height: 202px; background: #fff; }
table { table-layout: fixed; width: 1628px; border-collapse: separate; border-spacing: 0; }
.w60 { width: 60px; } .w80 { width: 80px; } .w100 { width: 100px; } .w108 { width: 108px; } .w800 { width: 800px; }
th, td { padding: 0; height: 16px; line-height: 15px; border-right: 1px solid #dadada; border-bottom: 1px solid #dadada; white-space: nowrap; overflow: hidden; text-align: center; font-weight: normal; }
th { background: #efefef; border-color: #d0d0d0; line-height: 13px; padding-bottom: 2px; }
th.span { border-bottom-color: #efefef; }
.strip td { height: 10px; line-height: 8px; background: #e1e1e1; border-color: #f4f4f4; }
td.first, th.first { background: #e1e1e1; border-bottom-color: #e1e1e1; }
th.first { border-bottom-color: #d0d0d0; }
.strip td.hot, td.first.hot { background: #c6c6c6; }
.grp td:last-child { background: #e6eefb; text-align: left; padding-left: 4px; }
td.r { text-align: right; padding-right: 4px; }
td.l { text-align: left; padding-left: 4px; }
td.m { text-align: right; padding-right: 5px; font: 11px/13px "Liberation Mono", monospace; }
.k div { display: flex; align-items: center; height: 15px; padding: 0 3px 0 5px; }
.trk { width: 43px; height: 11px; border: solid #c0c0c0; border-width: 0 1px; }
.trk i { display: block; height: 11px; background: #c8f5c8; }
.k b { font-weight: normal; flex: 1; text-align: right; padding-right: 2px; }
.k svg { width: 10px; height: 8px; }
.cur div { background: #0078d7; color: #fff; outline: 1px dotted #e08030; outline-offset: -1px; }
.cur .trk i { background: #a8d4a8; }
.vscroll { background: #f0f0f0; padding: 17px 0 0 7px; }
.vscroll i { display: block; width: 2px; height: 88px; background: #888; }
.hscroll { grid-column: 1 / -1; height: 16px; background: #f0f0f0; padding: 7px 0 0 17px; }
.hscroll i { display: block; width: 668px; height: 2px; background: #888; }
.sheets { display: flex; align-items: center; height: 22px; margin-bottom: 2px; }
.pg { width: 18px; height: 20px; display: grid; place-items: center; fill: #333; flex: none; }
.pg svg { width: 10px; height: 8px; }
.pg.off { fill: #888; }
.pg.big { width: 14px; }
.pg.big svg { width: 10px; height: 12px; }
.pgno { width: 63px; text-align: center; flex: none; }
.tabs { flex: 1; min-width: 0; display: flex; overflow: hidden; height: 22px; }
.tabs button { flex: none; padding: 0 8px; height: 20px; background: #efeff0; border: solid #c8c7d2; border-width: 1px 2px 1px 0; }
.tabs .act { background: #fff; height: 22px; border-left-width: 1px; border-top: 0; border-bottom-width: 2px; }

.status { display: flex; height: 22px; flex: none; align-items: center; justify-content: flex-end; padding-top: 1px; }
.modes { display: flex; gap: 2px; align-items: center; width: 303px; height: 18px; }
.modes button { height: 18px; padding: 0 3px; border: 1px solid transparent; }
.modes .in { background: #efefef; border-color: #a8a8a8 #e4e4e4 #e4e4e4 #a8a8a8; }
.status > span { height: 18px; padding-left: 5px; border-left: 1px solid #d4d4d4; white-space: nowrap; }
.s106 { width: 106px; } .s156 { width: 156px; } .s66 { width: 66px; } .s76 { width: 76px; } .s20 { width: 20px; }
```
